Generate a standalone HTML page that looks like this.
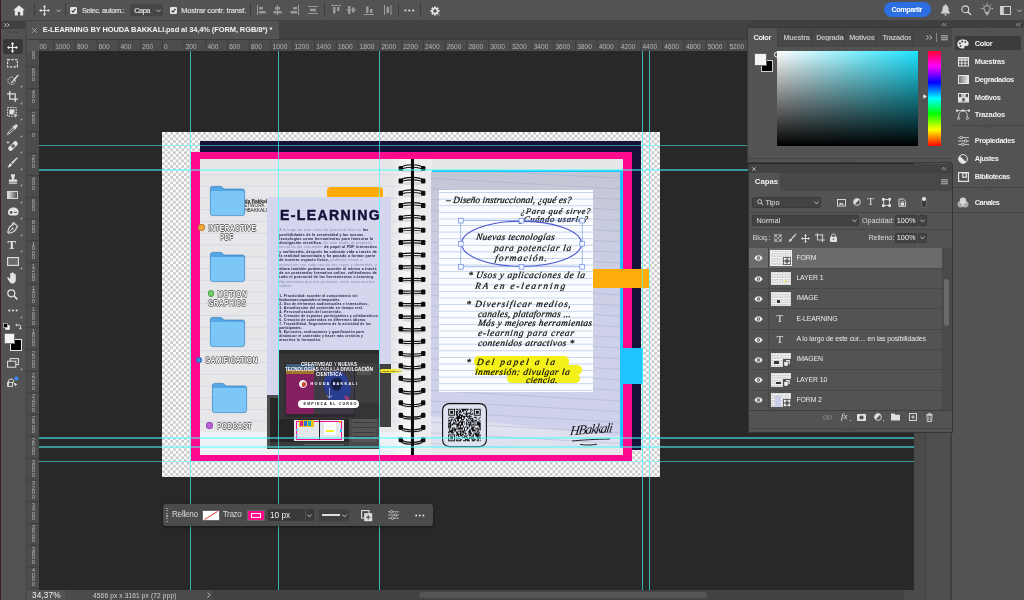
<!DOCTYPE html>
<html lang="es"><head><meta charset="utf-8"><title>E-LEARNING BY HOUDA BAKKALI.psd</title>
<style>
*{box-sizing:border-box;margin:0;padding:0}
html,body{width:1024px;height:600px;overflow:hidden;background:#282828;font-family:"Liberation Sans",sans-serif;color:#ddd;font-size:8px}
.a{position:absolute}
.t{position:absolute;white-space:nowrap;line-height:1}
#app{position:absolute;left:0;top:0;width:1024px;height:600px;overflow:hidden;background:#282828;will-change:transform}
.gv{position:absolute;width:1.2px;background:rgba(74,255,255,0.66);top:51px;height:539px}
.gh{position:absolute;height:1.5px;background:rgba(74,255,255,0.52);left:39px;width:875px}
.sep{position:absolute;width:1px;background:#3d3d3d;top:3px;height:14px}
svg{position:absolute;overflow:visible}
.hw{font-family:"Liberation Serif",serif;font-style:italic;color:#0e0e0e;-webkit-text-stroke:0.22px #0e0e0e;transform:skewX(-8deg);letter-spacing:-0.2px}
.pp{font-size:3.55px;color:#8286ad}
.pp b{color:#1b1640}
.pl{font-size:3.3px;color:#1b1640}
</style></head><body><div id="app">
<div class="a" style="left:39px;top:51px;width:875px;height:539px;background:#282828;"></div>
<div class="a" style="left:162px;top:132px;width:498px;height:345px;background:repeating-conic-gradient(#cbcbcb 0% 25%,#ffffff 0% 50%) 0 0/5.5px 5.5px"></div><div class="a" style="left:200.4px;top:141.2px;width:440.6px;height:308.6px;background:#17123a;"></div><div class="a" style="left:191px;top:152px;width:441px;height:309.3px;background:#ff0a8c;"></div><div class="a" style="left:200.3px;top:159.3px;width:422.4px;height:295.5px;background:#e7e7e9;"></div><div class="a" style="left:200.3px;top:173.9px;width:422.4px;height:280.9px;background-image:linear-gradient(to bottom,#d3d9e3 0,#d3d9e3 0.9px,transparent 0.9px,transparent 11.75px);background-size:100% 11.75px"></div><div class="a" style="left:200.3px;top:432px;width:210px;height:22.8px;background:rgba(240,246,250,0.75);"></div><div class="t" style="left:235.1px;top:198.8px;font-size:5.0px;color:#1a1a1a;font-weight:bold;letter-spacing:-0.1px;">Houda Bakkali</div><div class="t" style="left:240.8px;top:204px;font-size:4.8px;color:#2a2a2a;letter-spacing:-0.1px;">NETWORK</div><div class="t" style="left:239.4px;top:208.8px;font-size:4.8px;color:#2a2a2a;letter-spacing:-0.1px;">@HBAKKALI</div><svg style="left:210px;top:185.6px" width="35" height="30" viewBox="0 0 35 30"><path d="M2.4 0.4 H10 C11.6 0.4 12 1 13 2 C13.8 2.8 14.4 3 16 3 H32.6 C34 3 34.6 3.8 34.6 5 V27 C34.6 28.6 33.8 29.6 32.4 29.6 H2.6 C1.2 29.6 0.4 28.6 0.4 27 V2.6 C0.4 1.2 1.2 0.4 2.4 0.4 Z" fill="#55a6e6" stroke="#3d7fb8" stroke-width="0.7"/><path d="M0.8 6.6 C0.8 5.6 1.4 5 2.6 5 H32.4 C33.6 5 34.2 5.6 34.2 6.6 V27 C34.2 28.4 33.6 29.2 32.4 29.2 H2.6 C1.4 29.2 0.8 28.4 0.8 27 Z" fill="#7cc7f8"/></svg><svg style="left:210px;top:252px" width="35" height="30" viewBox="0 0 35 30"><path d="M2.4 0.4 H10 C11.6 0.4 12 1 13 2 C13.8 2.8 14.4 3 16 3 H32.6 C34 3 34.6 3.8 34.6 5 V27 C34.6 28.6 33.8 29.6 32.4 29.6 H2.6 C1.2 29.6 0.4 28.6 0.4 27 V2.6 C0.4 1.2 1.2 0.4 2.4 0.4 Z" fill="#55a6e6" stroke="#3d7fb8" stroke-width="0.7"/><path d="M0.8 6.6 C0.8 5.6 1.4 5 2.6 5 H32.4 C33.6 5 34.2 5.6 34.2 6.6 V27 C34.2 28.4 33.6 29.2 32.4 29.2 H2.6 C1.4 29.2 0.8 28.4 0.8 27 Z" fill="#7cc7f8"/></svg><svg style="left:210px;top:317.3px" width="35" height="30" viewBox="0 0 35 30"><path d="M2.4 0.4 H10 C11.6 0.4 12 1 13 2 C13.8 2.8 14.4 3 16 3 H32.6 C34 3 34.6 3.8 34.6 5 V27 C34.6 28.6 33.8 29.6 32.4 29.6 H2.6 C1.2 29.6 0.4 28.6 0.4 27 V2.6 C0.4 1.2 1.2 0.4 2.4 0.4 Z" fill="#55a6e6" stroke="#3d7fb8" stroke-width="0.7"/><path d="M0.8 6.6 C0.8 5.6 1.4 5 2.6 5 H32.4 C33.6 5 34.2 5.6 34.2 6.6 V27 C34.2 28.4 33.6 29.2 32.4 29.2 H2.6 C1.4 29.2 0.8 28.4 0.8 27 Z" fill="#7cc7f8"/></svg><svg style="left:211.6px;top:383px" width="35" height="30" viewBox="0 0 35 30"><path d="M2.4 0.4 H10 C11.6 0.4 12 1 13 2 C13.8 2.8 14.4 3 16 3 H32.6 C34 3 34.6 3.8 34.6 5 V27 C34.6 28.6 33.8 29.6 32.4 29.6 H2.6 C1.2 29.6 0.4 28.6 0.4 27 V2.6 C0.4 1.2 1.2 0.4 2.4 0.4 Z" fill="#55a6e6" stroke="#3d7fb8" stroke-width="0.7"/><path d="M0.8 6.6 C0.8 5.6 1.4 5 2.6 5 H32.4 C33.6 5 34.2 5.6 34.2 6.6 V27 C34.2 28.4 33.6 29.2 32.4 29.2 H2.6 C1.4 29.2 0.8 28.4 0.8 27 Z" fill="#7cc7f8"/></svg><div class="a" style="left:198.4px;top:224.4px;width:6.4px;height:6.4px;border-radius:50%;background:#f6a93b;border:0.5px solid rgba(0,0,0,0.25)"></div><div class="a" style="left:207.8px;top:290.40000000000003px;width:6.4px;height:6.4px;border-radius:50%;background:#6fd26a;border:0.5px solid rgba(0,0,0,0.25)"></div><div class="a" style="left:195.8px;top:356.5px;width:6.4px;height:6.4px;border-radius:50%;background:#3b8be6;border:0.5px solid rgba(0,0,0,0.25)"></div><div class="a" style="left:206.3px;top:422.40000000000003px;width:6.4px;height:6.4px;border-radius:50%;background:#c05fe0;border:0.5px solid rgba(0,0,0,0.25)"></div><div class="t" style="left:208px;top:223.6px;font-size:8.3px;font-weight:bold;letter-spacing:0.35px;color:#f6f6f6;transform:scaleX(0.818);transform-origin:left top;text-shadow:0.6px 0 #6c6c6c,-0.6px 0 #6c6c6c,0 0.6px #6c6c6c,0 -0.6px #6c6c6c,0.4px 0.4px #6c6c6c,-0.4px -0.4px #6c6c6c,0.4px -0.4px #6c6c6c,-0.4px 0.4px #6c6c6c">INTERACTIVE</div><div class="t" style="left:220px;top:232.6px;font-size:8.3px;font-weight:bold;letter-spacing:0.35px;color:#f6f6f6;transform:scaleX(0.759);transform-origin:left top;text-shadow:0.6px 0 #6c6c6c,-0.6px 0 #6c6c6c,0 0.6px #6c6c6c,0 -0.6px #6c6c6c,0.4px 0.4px #6c6c6c,-0.4px -0.4px #6c6c6c,0.4px -0.4px #6c6c6c,-0.4px 0.4px #6c6c6c">PDF</div><div class="t" style="left:217px;top:289.6px;font-size:8.3px;font-weight:bold;letter-spacing:0.35px;color:#f6f6f6;transform:scaleX(0.861);transform-origin:left top;text-shadow:0.6px 0 #6c6c6c,-0.6px 0 #6c6c6c,0 0.6px #6c6c6c,0 -0.6px #6c6c6c,0.4px 0.4px #6c6c6c,-0.4px -0.4px #6c6c6c,0.4px -0.4px #6c6c6c,-0.4px 0.4px #6c6c6c">MOTION</div><div class="t" style="left:208px;top:298.6px;font-size:8.3px;font-weight:bold;letter-spacing:0.35px;color:#f6f6f6;transform:scaleX(0.824);transform-origin:left top;text-shadow:0.6px 0 #6c6c6c,-0.6px 0 #6c6c6c,0 0.6px #6c6c6c,0 -0.6px #6c6c6c,0.4px 0.4px #6c6c6c,-0.4px -0.4px #6c6c6c,0.4px -0.4px #6c6c6c,-0.4px 0.4px #6c6c6c">GRAPHICS</div><div class="t" style="left:205.4px;top:355.6px;font-size:8.3px;font-weight:bold;letter-spacing:0.35px;color:#f6f6f6;transform:scaleX(0.816);transform-origin:left top;text-shadow:0.6px 0 #6c6c6c,-0.6px 0 #6c6c6c,0 0.6px #6c6c6c,0 -0.6px #6c6c6c,0.4px 0.4px #6c6c6c,-0.4px -0.4px #6c6c6c,0.4px -0.4px #6c6c6c,-0.4px 0.4px #6c6c6c">GAMIFICATION</div><div class="t" style="left:216.5px;top:421.6px;font-size:8.3px;font-weight:bold;letter-spacing:0.35px;color:#f6f6f6;transform:scaleX(0.809);transform-origin:left top;text-shadow:0.6px 0 #6c6c6c,-0.6px 0 #6c6c6c,0 0.6px #6c6c6c,0 -0.6px #6c6c6c,0.4px 0.4px #6c6c6c,-0.4px -0.4px #6c6c6c,0.4px -0.4px #6c6c6c,-0.4px 0.4px #6c6c6c">PODCAST</div><div class="a" style="left:326.6px;top:187.2px;width:56px;height:12px;background:#ffab0a;border-radius:4px 4px 0 0"></div><div class="a" style="left:266.8px;top:197px;width:124.2px;height:198px;background:#d3d6ec;"></div><div class="t" style="left:279.6px;top:207px;font-size:15.3px;font-weight:bold;color:#17123a;letter-spacing:1.477px;-webkit-text-stroke:0.5px #17123a;transform:scaleX(0.92);transform-origin:left top">E-LEARNING</div><div class="t pp" style="left:279.2px;top:229.40px;letter-spacing:0.272px">A lo largo de este curso he puesto el foco en <b>las</b></div><div class="t pp" style="left:279.2px;top:233.67px;letter-spacing:0.243px"><b>posibilidades de la creatividad y las nuevas</b></div><div class="t pp" style="left:279.2px;top:237.94px;letter-spacing:0.262px"><b>tecnologías como herramientas para fomentar la</b></div><div class="t pp" style="left:279.2px;top:242.21px;letter-spacing:0.261px"><b>divulgación científica.</b> De este modo, el proyecto</div><div class="t pp" style="left:279.2px;top:246.48px;letter-spacing:0.277px">inicial ha ido creciendo: <b>de papel al PDF interactivo</b></div><div class="t pp" style="left:279.2px;top:250.75px;letter-spacing:0.247px"><b>y multimedia, después ha cobrado vida a través de</b></div><div class="t pp" style="left:279.2px;top:255.02px;letter-spacing:0.264px"><b>la realidad aumentada y ha pasado a formar parte</b></div><div class="t pp" style="left:279.2px;top:259.29px;letter-spacing:0.247px"><b>de nuestro espacio físico,</b> pudiendo entrar a</div><div class="t pp" style="left:279.2px;top:263.56px;letter-spacing:0.251px">interactuar con cada uno de sus capas y elementos, y</div><div class="t pp" style="left:279.2px;top:267.83px;letter-spacing:0.249px"><b>ahora también podemos acceder al mismo a través</b></div><div class="t pp" style="left:279.2px;top:272.10px;letter-spacing:0.239px"><b>de un contenedor formativo online, valiéndonos de</b></div><div class="t pp" style="left:279.2px;top:276.37px;letter-spacing:0.283px"><b>todo el potencial de las herramientas e-learning.</b></div><div class="t pp" style="left:279.2px;top:280.64px;letter-spacing:0.291px">Herramientas que nos permiten, entre otros muchos</div><div class="t pp" style="left:279.2px;top:284.91px;letter-spacing:0.100px">valores:</div><div class="t pl" style="left:279.2px;top:295.40px;letter-spacing:0.250px"><b>1- Practicidad: acceder al conocimiento sin</b></div><div class="t pl" style="left:279.2px;top:299.38px;letter-spacing:0.029px"><b>limitaciones espaciales ni temporales.</b></div><div class="t pl" style="left:279.2px;top:303.36px;letter-spacing:0.240px"><b>2- Uso de elementos audiovisuales e interactivos.</b></div><div class="t pl" style="left:279.2px;top:307.34px;letter-spacing:0.271px"><b>3- Actualización del contenido en tiempo real.</b></div><div class="t pl" style="left:279.2px;top:311.32px;letter-spacing:0.321px"><b>4- Personalización del contenido.</b></div><div class="t pl" style="left:279.2px;top:315.30px;letter-spacing:0.248px"><b>5- Creación de espacios participativos y colaborativos.</b></div><div class="t pl" style="left:279.2px;top:319.28px;letter-spacing:0.254px"><b>6- Creación de contenidos en diferentes idioma.</b></div><div class="t pl" style="left:279.2px;top:323.26px;letter-spacing:0.266px"><b>7- Trazabilidad. Seguimiento de la actividad de los</b></div><div class="t pl" style="left:279.2px;top:327.24px;letter-spacing:0.100px"><b>participantes.</b></div><div class="t pl" style="left:279.2px;top:331.22px;letter-spacing:0.238px"><b>8- Ejercicios, evaluaciones y gamificación para</b></div><div class="t pl" style="left:279.2px;top:335.20px;letter-spacing:0.269px"><b>dinamizar el contenido y hacer más creativa y</b></div><div class="t pl" style="left:279.2px;top:339.18px;letter-spacing:0.318px"><b>atractiva la formación.</b></div><div class="a" style="left:279px;top:364px;width:112px;height:63px;background:#3a3a3a;"></div><div class="a" style="left:379px;top:364px;width:12px;height:63px;background:#404040;"></div><div class="a" style="left:380px;top:368.6px;width:22.4px;height:4.8px;background:#f2e52a;border-radius:2.4px"></div><div class="t" style="left:382.4px;top:370px;font-size:2px;color:#333;font-weight:bold;">CURSO · CREACIÓN</div><div class="a" style="left:267px;top:395px;width:112px;height:54px;background:#3b3b3b;"></div><div class="a" style="left:267px;top:395px;width:112px;height:3px;background:#4a4a4a;"></div><div class="a" style="left:267px;top:398px;width:3px;height:48px;background:#4d4d4d;"></div><div class="a" style="left:349px;top:398px;width:30px;height:48px;background:#4a4a4a;"></div><div class="a" style="left:270px;top:398px;width:79px;height:44px;background:#262626;"></div><div class="a" style="left:294px;top:419.6px;width:50px;height:21.6px;background:#e8e8ea;"></div><div class="a" style="left:296px;top:421px;width:46px;height:19px;background:#ff0a8c;"></div><div class="a" style="left:297.2px;top:422px;width:43.6px;height:17px;background:#e6e7ea;"></div><div class="a" style="left:298.5px;top:420px;width:15px;height:6.5px;background:#e8c21a;"></div><div class="a" style="left:300px;top:420.6px;width:3px;height:5px;background:#d0207a;"></div><div class="a" style="left:304px;top:420.6px;width:3px;height:5px;background:#2a6ae0;"></div><div class="a" style="left:308px;top:420.6px;width:3px;height:5px;background:#1aa7c0;"></div><div class="a" style="left:296px;top:429px;width:2.4px;height:2.4px;background:#7cc7f8;"></div><div class="a" style="left:296px;top:434px;width:2.4px;height:2.4px;background:#7cc7f8;"></div><div class="a" style="left:318.6px;top:420px;width:1px;height:20px;background:#222;"></div><div class="a" style="left:324px;top:421.5px;width:12px;height:13px;background:#fafbff;"></div><div class="a" style="left:325.5px;top:430px;width:8px;height:2.2px;background:#f4f01a;"></div><div class="a" style="left:338.6px;top:421px;width:2px;height:1.6px;background:#ffab0a;"></div><div class="a" style="left:340px;top:429px;width:2px;height:3px;background:#1fc3ff;"></div><div class="a" style="left:352px;top:402px;width:24px;height:40px;background:#555;"></div><div class="a" style="left:353px;top:404.0px;width:22px;height:0.6px;background:#3a3a3a;"></div><div class="a" style="left:353px;top:408.6px;width:22px;height:0.6px;background:#3a3a3a;"></div><div class="a" style="left:353px;top:413.2px;width:22px;height:0.6px;background:#3a3a3a;"></div><div class="a" style="left:353px;top:417.8px;width:22px;height:0.6px;background:#3a3a3a;"></div><div class="a" style="left:353px;top:422.4px;width:22px;height:0.6px;background:#3a3a3a;"></div><div class="a" style="left:353px;top:427.0px;width:22px;height:0.6px;background:#3a3a3a;"></div><div class="a" style="left:353px;top:431.6px;width:22px;height:0.6px;background:#3a3a3a;"></div><div class="a" style="left:353px;top:436.2px;width:22px;height:0.6px;background:#3a3a3a;"></div><div class="a" style="left:304px;top:443.5px;width:40px;height:1.6px;background:#666;"></div><div class="a" style="left:279px;top:350px;width:100px;height:69px;background:#3c3d40;"></div><div class="a" style="left:279px;top:350px;width:100px;height:4px;background:#2f2f2f;"></div><div class="a" style="left:285px;top:363px;width:70px;height:54px;background:#2e2830;"></div><div class="a" style="left:286px;top:364px;width:28px;height:50px;background:#b41c7c;"></div><div class="a" style="left:286px;top:364px;width:28px;height:6px;background:#4f7fb0;"></div><div class="a" style="left:286px;top:370px;width:28px;height:4px;background:#e0a030;"></div><div class="a" style="left:314px;top:364px;width:40px;height:50px;background:#4a4552;"></div><svg style="left:322px;top:370px" width="32" height="40"><path d="M6 4 C14 -2 26 2 26 12 C32 18 28 30 22 34 C14 40 6 34 6 26 C0 18 0 10 6 4 Z" fill="#2a49c8"/><path d="M12 8 C18 6 22 10 20 16 C18 22 12 22 10 18 C8 14 8 10 12 8Z" fill="#121a5a"/><path d="M22 26 C27 25 29 30 25 33 Z" fill="#e04aa0"/><path d="M25 30 L31 36 L24 37Z" fill="#e8c33a"/></svg><div class="a" style="left:355px;top:363px;width:24px;height:40px;background:#4a4a4a;"></div><div class="a" style="left:357px;top:366px;width:14px;height:9px;background:#6a6a6a;"></div><div class="a" style="left:279px;top:350px;width:100px;height:69px;background:rgba(40,40,44,0.35);"></div><div class="t" style="left:279px;width:100px;text-align:center;top:362.6px;font-size:4.5px;color:#fff;font-weight:bold;letter-spacing:0.08px;">CREATIVIDAD <span style="font-weight:normal">Y</span> NUEVAS</div><div class="t" style="left:279px;width:100px;text-align:center;top:368px;font-size:4.5px;color:#fff;font-weight:bold;letter-spacing:0.08px;">TECNOLOGÍAS <span style="font-weight:normal">PARA LA</span> DIVULGACIÓN</div><div class="t" style="left:279px;width:100px;text-align:center;top:373.4px;font-size:4.5px;color:#fff;font-weight:bold;letter-spacing:0.08px;">CIENTÍFICA</div><div class="a" style="left:299px;top:380px;width:8.4px;height:8.4px;border-radius:50%;background:#f2e9e4;border:0.6px solid #fff;overflow:hidden"><div class="a" style="left:2.2px;top:1.2px;width:3.6px;height:6.8px;background:#c8452f;border-radius:2px"></div></div><div class="t" style="left:310.6px;top:382.6px;font-size:3.8px;color:#fff;font-weight:bold;letter-spacing:1.2px">HOUDA BAKKALI</div><svg style="left:326px;top:388px" width="7" height="11"><path d="M3.5 0 V10 M0.6 7 L3.5 10 L6.4 7" stroke="#fff" stroke-width="0.5" fill="none"/></svg><div class="a" style="left:298px;top:400.4px;width:61px;height:8px;background:#fff;border-radius:4px"></div><div class="t" style="left:303.6px;top:402.6px;font-size:3.7px;color:#222;font-weight:bold;letter-spacing:1.1px">EMPIEZA EL CURSO</div><div class="a" style="left:413px;top:159.3px;width:19px;height:295.5px;background:#ececee;"></div><div class="a" style="left:392px;top:159.3px;width:18px;height:295.5px;background:linear-gradient(to right,rgba(255,255,255,0),rgba(250,250,252,0.9))"></div><svg style="left:0;top:0" width="1024" height="600"><ellipse cx="412" cy="171.3" rx="10" ry="1.5" fill="#c8c4c0" opacity="0.6"/><path d="M400.8 167.9 C404 163.7 420 163.7 423.2 167.9" stroke="#111" stroke-width="1.2" fill="none"/><path d="M400.8 170.1 C404 166.3 420 166.3 423.2 170.1" stroke="#1a1a1a" stroke-width="1.1" fill="none"/><rect x="398.6" y="166.1" width="4.4" height="5" rx="1.2" fill="#0c0c0c"/><rect x="421" y="166.1" width="4.4" height="5" rx="1.2" fill="#0c0c0c"/><ellipse cx="412" cy="183.6" rx="10" ry="1.5" fill="#c8c4c0" opacity="0.6"/><path d="M400.8 180.2 C404 176.4 420 176.4 423.2 180.2" stroke="#111" stroke-width="1.2" fill="none"/><path d="M400.8 182.4 C404 179.0 420 179.0 423.2 182.4" stroke="#1a1a1a" stroke-width="1.1" fill="none"/><rect x="398.6" y="178.4" width="4.4" height="5" rx="1.2" fill="#0c0c0c"/><rect x="421" y="178.4" width="4.4" height="5" rx="1.2" fill="#0c0c0c"/><ellipse cx="412" cy="195.9" rx="10" ry="1.5" fill="#c8c4c0" opacity="0.6"/><path d="M400.8 192.5 C404 189.1 420 189.1 423.2 192.5" stroke="#111" stroke-width="1.2" fill="none"/><path d="M400.8 194.7 C404 191.7 420 191.7 423.2 194.7" stroke="#1a1a1a" stroke-width="1.1" fill="none"/><rect x="398.6" y="190.7" width="4.4" height="5" rx="1.2" fill="#0c0c0c"/><rect x="421" y="190.7" width="4.4" height="5" rx="1.2" fill="#0c0c0c"/><ellipse cx="412" cy="208.3" rx="10" ry="1.5" fill="#c8c4c0" opacity="0.6"/><path d="M400.8 204.9 C404 201.8 420 201.8 423.2 204.9" stroke="#111" stroke-width="1.2" fill="none"/><path d="M400.8 207.1 C404 204.3 420 204.3 423.2 207.1" stroke="#1a1a1a" stroke-width="1.1" fill="none"/><rect x="398.6" y="203.1" width="4.4" height="5" rx="1.2" fill="#0c0c0c"/><rect x="421" y="203.1" width="4.4" height="5" rx="1.2" fill="#0c0c0c"/><ellipse cx="412" cy="220.6" rx="10" ry="1.5" fill="#c8c4c0" opacity="0.6"/><path d="M400.8 217.2 C404 214.6 420 214.6 423.2 217.2" stroke="#111" stroke-width="1.2" fill="none"/><path d="M400.8 219.4 C404 217.0 420 217.0 423.2 219.4" stroke="#1a1a1a" stroke-width="1.1" fill="none"/><rect x="398.6" y="215.4" width="4.4" height="5" rx="1.2" fill="#0c0c0c"/><rect x="421" y="215.4" width="4.4" height="5" rx="1.2" fill="#0c0c0c"/><ellipse cx="412" cy="232.9" rx="10" ry="1.5" fill="#c8c4c0" opacity="0.6"/><path d="M400.8 229.5 C404 227.3 420 227.3 423.2 229.5" stroke="#111" stroke-width="1.2" fill="none"/><path d="M400.8 231.7 C404 229.7 420 229.7 423.2 231.7" stroke="#1a1a1a" stroke-width="1.1" fill="none"/><rect x="398.6" y="227.7" width="4.4" height="5" rx="1.2" fill="#0c0c0c"/><rect x="421" y="227.7" width="4.4" height="5" rx="1.2" fill="#0c0c0c"/><ellipse cx="412" cy="245.2" rx="10" ry="1.5" fill="#c8c4c0" opacity="0.6"/><path d="M400.8 241.8 C404 240.0 420 240.0 423.2 241.8" stroke="#111" stroke-width="1.2" fill="none"/><path d="M400.8 244.1 C404 242.4 420 242.4 423.2 244.1" stroke="#1a1a1a" stroke-width="1.1" fill="none"/><rect x="398.6" y="240.1" width="4.4" height="5" rx="1.2" fill="#0c0c0c"/><rect x="421" y="240.1" width="4.4" height="5" rx="1.2" fill="#0c0c0c"/><ellipse cx="412" cy="257.6" rx="10" ry="1.5" fill="#c8c4c0" opacity="0.6"/><path d="M400.8 254.2 C404 252.7 420 252.7 423.2 254.2" stroke="#111" stroke-width="1.2" fill="none"/><path d="M400.8 256.4 C404 255.1 420 255.1 423.2 256.4" stroke="#1a1a1a" stroke-width="1.1" fill="none"/><rect x="398.6" y="252.4" width="4.4" height="5" rx="1.2" fill="#0c0c0c"/><rect x="421" y="252.4" width="4.4" height="5" rx="1.2" fill="#0c0c0c"/><ellipse cx="412" cy="269.9" rx="10" ry="1.5" fill="#c8c4c0" opacity="0.6"/><path d="M400.8 266.5 C404 265.4 420 265.4 423.2 266.5" stroke="#111" stroke-width="1.2" fill="none"/><path d="M400.8 268.7 C404 267.7 420 267.7 423.2 268.7" stroke="#1a1a1a" stroke-width="1.1" fill="none"/><rect x="398.6" y="264.7" width="4.4" height="5" rx="1.2" fill="#0c0c0c"/><rect x="421" y="264.7" width="4.4" height="5" rx="1.2" fill="#0c0c0c"/><ellipse cx="412" cy="282.2" rx="10" ry="1.5" fill="#c8c4c0" opacity="0.6"/><path d="M400.8 278.8 C404 278.2 420 278.2 423.2 278.8" stroke="#111" stroke-width="1.2" fill="none"/><path d="M400.8 281.0 C404 280.4 420 280.4 423.2 281.0" stroke="#1a1a1a" stroke-width="1.1" fill="none"/><rect x="398.6" y="277.0" width="4.4" height="5" rx="1.2" fill="#0c0c0c"/><rect x="421" y="277.0" width="4.4" height="5" rx="1.2" fill="#0c0c0c"/><ellipse cx="412" cy="294.6" rx="10" ry="1.5" fill="#c8c4c0" opacity="0.6"/><path d="M400.8 291.2 C404 290.9 420 290.9 423.2 291.2" stroke="#111" stroke-width="1.2" fill="none"/><path d="M400.8 293.4 C404 293.1 420 293.1 423.2 293.4" stroke="#1a1a1a" stroke-width="1.1" fill="none"/><rect x="398.6" y="289.4" width="4.4" height="5" rx="1.2" fill="#0c0c0c"/><rect x="421" y="289.4" width="4.4" height="5" rx="1.2" fill="#0c0c0c"/><ellipse cx="412" cy="307.9" rx="10" ry="1.5" fill="#c8c4c0" opacity="0.6"/><path d="M400.8 303.5 C404 303.6 420 303.6 423.2 303.5" stroke="#111" stroke-width="1.2" fill="none"/><path d="M400.8 305.7 C404 305.8 420 305.8 423.2 305.7" stroke="#1a1a1a" stroke-width="1.1" fill="none"/><rect x="398.6" y="301.7" width="4.4" height="5" rx="1.2" fill="#0c0c0c"/><rect x="421" y="301.7" width="4.4" height="5" rx="1.2" fill="#0c0c0c"/><ellipse cx="412" cy="320.2" rx="10" ry="1.5" fill="#c8c4c0" opacity="0.6"/><path d="M400.8 315.8 C404 316.3 420 316.3 423.2 315.8" stroke="#111" stroke-width="1.2" fill="none"/><path d="M400.8 318.0 C404 318.5 420 318.5 423.2 318.0" stroke="#1a1a1a" stroke-width="1.1" fill="none"/><rect x="398.6" y="314.0" width="4.4" height="5" rx="1.2" fill="#0c0c0c"/><rect x="421" y="314.0" width="4.4" height="5" rx="1.2" fill="#0c0c0c"/><ellipse cx="412" cy="332.6" rx="10" ry="1.5" fill="#c8c4c0" opacity="0.6"/><path d="M400.8 328.2 C404 329.0 420 329.0 423.2 328.2" stroke="#111" stroke-width="1.2" fill="none"/><path d="M400.8 330.4 C404 331.2 420 331.2 423.2 330.4" stroke="#1a1a1a" stroke-width="1.1" fill="none"/><rect x="398.6" y="326.4" width="4.4" height="5" rx="1.2" fill="#0c0c0c"/><rect x="421" y="326.4" width="4.4" height="5" rx="1.2" fill="#0c0c0c"/><ellipse cx="412" cy="344.9" rx="10" ry="1.5" fill="#c8c4c0" opacity="0.6"/><path d="M400.8 340.5 C404 341.8 420 341.8 423.2 340.5" stroke="#111" stroke-width="1.2" fill="none"/><path d="M400.8 342.7 C404 343.8 420 343.8 423.2 342.7" stroke="#1a1a1a" stroke-width="1.1" fill="none"/><rect x="398.6" y="338.7" width="4.4" height="5" rx="1.2" fill="#0c0c0c"/><rect x="421" y="338.7" width="4.4" height="5" rx="1.2" fill="#0c0c0c"/><ellipse cx="412" cy="357.2" rx="10" ry="1.5" fill="#c8c4c0" opacity="0.6"/><path d="M400.8 352.8 C404 354.5 420 354.5 423.2 352.8" stroke="#111" stroke-width="1.2" fill="none"/><path d="M400.8 355.0 C404 356.5 420 356.5 423.2 355.0" stroke="#1a1a1a" stroke-width="1.1" fill="none"/><rect x="398.6" y="351.0" width="4.4" height="5" rx="1.2" fill="#0c0c0c"/><rect x="421" y="351.0" width="4.4" height="5" rx="1.2" fill="#0c0c0c"/><ellipse cx="412" cy="369.6" rx="10" ry="1.5" fill="#c8c4c0" opacity="0.6"/><path d="M400.8 365.1 C404 367.2 420 367.2 423.2 365.1" stroke="#111" stroke-width="1.2" fill="none"/><path d="M400.8 367.3 C404 369.2 420 369.2 423.2 367.3" stroke="#1a1a1a" stroke-width="1.1" fill="none"/><rect x="398.6" y="363.3" width="4.4" height="5" rx="1.2" fill="#0c0c0c"/><rect x="421" y="363.3" width="4.4" height="5" rx="1.2" fill="#0c0c0c"/><ellipse cx="412" cy="381.9" rx="10" ry="1.5" fill="#c8c4c0" opacity="0.6"/><path d="M400.8 377.5 C404 379.9 420 379.9 423.2 377.5" stroke="#111" stroke-width="1.2" fill="none"/><path d="M400.8 379.7 C404 381.9 420 381.9 423.2 379.7" stroke="#1a1a1a" stroke-width="1.1" fill="none"/><rect x="398.6" y="375.7" width="4.4" height="5" rx="1.2" fill="#0c0c0c"/><rect x="421" y="375.7" width="4.4" height="5" rx="1.2" fill="#0c0c0c"/><ellipse cx="412" cy="394.2" rx="10" ry="1.5" fill="#c8c4c0" opacity="0.6"/><path d="M400.8 389.8 C404 392.6 420 392.6 423.2 389.8" stroke="#111" stroke-width="1.2" fill="none"/><path d="M400.8 392.0 C404 394.6 420 394.6 423.2 392.0" stroke="#1a1a1a" stroke-width="1.1" fill="none"/><rect x="398.6" y="388.0" width="4.4" height="5" rx="1.2" fill="#0c0c0c"/><rect x="421" y="388.0" width="4.4" height="5" rx="1.2" fill="#0c0c0c"/><ellipse cx="412" cy="406.5" rx="10" ry="1.5" fill="#c8c4c0" opacity="0.6"/><path d="M400.8 402.1 C404 405.4 420 405.4 423.2 402.1" stroke="#111" stroke-width="1.2" fill="none"/><path d="M400.8 404.3 C404 407.2 420 407.2 423.2 404.3" stroke="#1a1a1a" stroke-width="1.1" fill="none"/><rect x="398.6" y="400.3" width="4.4" height="5" rx="1.2" fill="#0c0c0c"/><rect x="421" y="400.3" width="4.4" height="5" rx="1.2" fill="#0c0c0c"/><ellipse cx="412" cy="418.9" rx="10" ry="1.5" fill="#c8c4c0" opacity="0.6"/><path d="M400.8 414.5 C404 418.1 420 418.1 423.2 414.5" stroke="#111" stroke-width="1.2" fill="none"/><path d="M400.8 416.7 C404 419.9 420 419.9 423.2 416.7" stroke="#1a1a1a" stroke-width="1.1" fill="none"/><rect x="398.6" y="412.7" width="4.4" height="5" rx="1.2" fill="#0c0c0c"/><rect x="421" y="412.7" width="4.4" height="5" rx="1.2" fill="#0c0c0c"/><ellipse cx="412" cy="431.2" rx="10" ry="1.5" fill="#c8c4c0" opacity="0.6"/><path d="M400.8 426.8 C404 430.8 420 430.8 423.2 426.8" stroke="#111" stroke-width="1.2" fill="none"/><path d="M400.8 429.0 C404 432.6 420 432.6 423.2 429.0" stroke="#1a1a1a" stroke-width="1.1" fill="none"/><rect x="398.6" y="425.0" width="4.4" height="5" rx="1.2" fill="#0c0c0c"/><rect x="421" y="425.0" width="4.4" height="5" rx="1.2" fill="#0c0c0c"/><ellipse cx="412" cy="443.5" rx="10" ry="1.5" fill="#c8c4c0" opacity="0.6"/><path d="M400.8 439.1 C404 443.5 420 443.5 423.2 439.1" stroke="#111" stroke-width="1.2" fill="none"/><path d="M400.8 441.3 C404 445.3 420 445.3 423.2 441.3" stroke="#1a1a1a" stroke-width="1.1" fill="none"/><rect x="398.6" y="437.3" width="4.4" height="5" rx="1.2" fill="#0c0c0c"/><rect x="421" y="437.3" width="4.4" height="5" rx="1.2" fill="#0c0c0c"/></svg><div class="a" style="left:410.6px;top:159.3px;width:3.4px;height:295.5px;background:#0c0c0c;"></div><div class="a" style="left:431px;top:172px;width:190px;height:275.6px;overflow:hidden;background:linear-gradient(to bottom,#c5c6d4 0,#c9cbdf 50px,#cdd0e8 140px,#cfd2ea 100%)"><svg style="left:0;top:220px" width="190" height="56"><path d="M0 24 L56 30 L190 44.5 V56 H0 Z" fill="#dfe1ee"/></svg><div class="a" style="left:-20px;top:-20px;width:240px;height:320px;transform:rotate(3.2deg);transform-origin:20px 20px;background-image:linear-gradient(to bottom,rgba(140,160,200,0.34) 0,rgba(140,160,200,0.34) 0.8px,transparent 0.8px,transparent 10.6px);background-size:100% 10.6px;background-position:0 4.6px"></div></div><div class="a" style="left:431.6px;top:169.6px;width:191.4px;height:2.6px;background:#1fc3ff;"></div><div class="a" style="left:620px;top:169.6px;width:3px;height:278.4px;background:#1fc3ff;"></div><div class="a" style="left:439.2px;top:190px;width:154.1px;height:201.5px;background-color:#fbfcff;background-image:linear-gradient(to bottom,transparent 0,transparent 6px,#c3d3ea 6px,#c3d3ea 6.6px);background-size:100% 6.6px;background-position:0 3px"></div><div class="a" style="left:473.6px;top:355.5px;width:95px;height:11px;background:#f4f01a;border-radius:5px"></div><div class="a" style="left:475px;top:364.5px;width:106.7px;height:10.5px;background:#f4f01a;border-radius:5px"></div><div class="a" style="left:507px;top:373.5px;width:73px;height:9.5px;background:#f4f01a;border-radius:5px"></div><div class="t hw" style="left:445.5px;top:195.67px;font-size:9.4px;letter-spacing:0.075px">– Diseño instruccional, ¿qué es?</div><div class="t hw" style="left:520.5px;top:207.07px;font-size:8.6px;letter-spacing:0.686px">¿Para qué sirve?</div><div class="t hw" style="left:519px;top:215.47px;font-size:8.6px;letter-spacing:0.647px">¿Cuándo usarlo?</div><div class="t hw" style="left:476px;top:232.77px;font-size:9.4px;letter-spacing:0.325px">Nuevas tecnologías</div><div class="t hw" style="left:493.8px;top:244.17px;font-size:9.4px;letter-spacing:0.723px">para potenciar la</div><div class="t hw" style="left:495px;top:254.37px;font-size:9.4px;letter-spacing:1.234px">formación.</div><div class="t hw" style="left:468px;top:271.37px;font-size:9.4px;letter-spacing:0.544px">* Usos y aplicaciones de la</div><div class="t hw" style="left:474.8px;top:282.37px;font-size:9.4px;letter-spacing:1.755px">RA en e-learning</div><div class="t hw" style="left:466px;top:300.37px;font-size:9.4px;letter-spacing:1.019px">* Diversificar medios,</div><div class="t hw" style="left:478px;top:309.77px;font-size:9.4px;letter-spacing:0.216px">canales, plataformas ...</div><div class="t hw" style="left:478px;top:318.97px;font-size:9.4px;letter-spacing:0.293px">Más y mejores herramientas</div><div class="t hw" style="left:478px;top:329.37px;font-size:9.4px;letter-spacing:0.729px">e-learning para crear</div><div class="t hw" style="left:478px;top:338.97px;font-size:9.4px;letter-spacing:0.386px">contenidos atractivos *</div><div class="t hw" style="left:465.5px;top:358.37px;font-size:9.4px;letter-spacing:1.905px">* Del papel a la</div><div class="t hw" style="left:475px;top:367.57px;font-size:9.4px;letter-spacing:0.492px">inmersión: divulgar la</div><div class="t hw" style="left:526px;top:376.37px;font-size:9.4px;letter-spacing:0.311px">ciencia.</div><svg style="left:455px;top:215px" width="135" height="58"><ellipse cx="66.5" cy="28.7" rx="60" ry="22.6" fill="none" stroke="#4d58cf" stroke-width="1.15"/><rect x="5.8" y="5.6" width="121.4" height="46.2" fill="none" stroke="#6b8fe0" stroke-width="0.6"/><rect x="3.4" y="3.1999999999999997" width="4.8" height="4.8" fill="#f2f5ff" stroke="#6b8fe0" stroke-width="0.7"/><rect x="64.1" y="3.1999999999999997" width="4.8" height="4.8" fill="#f2f5ff" stroke="#6b8fe0" stroke-width="0.7"/><rect x="124.8" y="3.1999999999999997" width="4.8" height="4.8" fill="#f2f5ff" stroke="#6b8fe0" stroke-width="0.7"/><rect x="3.4" y="26.3" width="4.8" height="4.8" fill="#f2f5ff" stroke="#6b8fe0" stroke-width="0.7"/><rect x="124.8" y="26.3" width="4.8" height="4.8" fill="#f2f5ff" stroke="#6b8fe0" stroke-width="0.7"/><rect x="3.4" y="49.4" width="4.8" height="4.8" fill="#f2f5ff" stroke="#6b8fe0" stroke-width="0.7"/><rect x="64.1" y="49.4" width="4.8" height="4.8" fill="#f2f5ff" stroke="#6b8fe0" stroke-width="0.7"/><rect x="124.8" y="49.4" width="4.8" height="4.8" fill="#f2f5ff" stroke="#6b8fe0" stroke-width="0.7"/></svg><div class="a" style="left:593.3px;top:269.3px;width:56px;height:18.4px;background:#ffab0a;"></div><div class="a" style="left:622px;top:347.6px;width:20.6px;height:36.2px;background:#1fc3ff;"></div><svg style="left:442px;top:402.6px" width="45" height="44.2"><rect x="0.6" y="0.6" width="43.8" height="43" rx="6.5" fill="#dfe2f0" stroke="#111" stroke-width="1.1"/><path d="M14.08 5.80h0.98v0.98h-0.98zM15.07 5.80h0.98v0.98h-0.98zM17.04 5.80h0.98v0.98h-0.98zM19.00 5.80h0.98v0.98h-0.98zM19.99 5.80h0.98v0.98h-0.98zM20.98 5.80h0.98v0.98h-0.98zM21.96 5.80h0.98v0.98h-0.98zM22.95 5.80h0.98v0.98h-0.98zM23.93 5.80h0.98v0.98h-0.98zM24.91 5.80h0.98v0.98h-0.98zM25.90 5.80h0.98v0.98h-0.98zM27.87 5.80h0.98v0.98h-0.98zM28.86 5.80h0.98v0.98h-0.98zM16.05 6.79h0.98v0.98h-0.98zM18.02 6.79h0.98v0.98h-0.98zM19.99 6.79h0.98v0.98h-0.98zM20.98 6.79h0.98v0.98h-0.98zM21.96 6.79h0.98v0.98h-0.98zM22.95 6.79h0.98v0.98h-0.98zM24.91 6.79h0.98v0.98h-0.98zM27.87 6.79h0.98v0.98h-0.98zM29.84 6.79h0.98v0.98h-0.98zM14.08 7.77h0.98v0.98h-0.98zM15.07 7.77h0.98v0.98h-0.98zM17.04 7.77h0.98v0.98h-0.98zM18.02 7.77h0.98v0.98h-0.98zM19.99 7.77h0.98v0.98h-0.98zM20.98 7.77h0.98v0.98h-0.98zM23.93 7.77h0.98v0.98h-0.98zM28.86 7.77h0.98v0.98h-0.98zM14.08 8.75h0.98v0.98h-0.98zM15.07 8.75h0.98v0.98h-0.98zM17.04 8.75h0.98v0.98h-0.98zM18.02 8.75h0.98v0.98h-0.98zM19.00 8.75h0.98v0.98h-0.98zM23.93 8.75h0.98v0.98h-0.98zM27.87 8.75h0.98v0.98h-0.98zM14.08 9.74h0.98v0.98h-0.98zM16.05 9.74h0.98v0.98h-0.98zM20.98 9.74h0.98v0.98h-0.98zM21.96 9.74h0.98v0.98h-0.98zM23.93 9.74h0.98v0.98h-0.98zM24.91 9.74h0.98v0.98h-0.98zM25.90 9.74h0.98v0.98h-0.98zM26.88 9.74h0.98v0.98h-0.98zM27.87 9.74h0.98v0.98h-0.98zM29.84 9.74h0.98v0.98h-0.98zM14.08 10.72h0.98v0.98h-0.98zM15.07 10.72h0.98v0.98h-0.98zM17.04 10.72h0.98v0.98h-0.98zM18.02 10.72h0.98v0.98h-0.98zM22.95 10.72h0.98v0.98h-0.98zM23.93 10.72h0.98v0.98h-0.98zM24.91 10.72h0.98v0.98h-0.98zM27.87 10.72h0.98v0.98h-0.98zM28.86 10.72h0.98v0.98h-0.98zM29.84 10.72h0.98v0.98h-0.98zM14.08 11.71h0.98v0.98h-0.98zM15.07 11.71h0.98v0.98h-0.98zM17.04 11.71h0.98v0.98h-0.98zM18.02 11.71h0.98v0.98h-0.98zM19.00 11.71h0.98v0.98h-0.98zM19.99 11.71h0.98v0.98h-0.98zM23.93 11.71h0.98v0.98h-0.98zM26.88 11.71h0.98v0.98h-0.98zM15.07 12.70h0.98v0.98h-0.98zM16.05 12.70h0.98v0.98h-0.98zM17.04 12.70h0.98v0.98h-0.98zM19.00 12.70h0.98v0.98h-0.98zM19.99 12.70h0.98v0.98h-0.98zM20.98 12.70h0.98v0.98h-0.98zM21.96 12.70h0.98v0.98h-0.98zM22.95 12.70h0.98v0.98h-0.98zM23.93 12.70h0.98v0.98h-0.98zM24.91 12.70h0.98v0.98h-0.98zM25.90 12.70h0.98v0.98h-0.98zM26.88 12.70h0.98v0.98h-0.98zM27.87 12.70h0.98v0.98h-0.98zM28.86 12.70h0.98v0.98h-0.98zM7.19 13.68h0.98v0.98h-0.98zM8.17 13.68h0.98v0.98h-0.98zM9.16 13.68h0.98v0.98h-0.98zM10.14 13.68h0.98v0.98h-0.98zM11.12 13.68h0.98v0.98h-0.98zM14.08 13.68h0.98v0.98h-0.98zM15.07 13.68h0.98v0.98h-0.98zM16.05 13.68h0.98v0.98h-0.98zM17.04 13.68h0.98v0.98h-0.98zM18.02 13.68h0.98v0.98h-0.98zM19.00 13.68h0.98v0.98h-0.98zM20.98 13.68h0.98v0.98h-0.98zM21.96 13.68h0.98v0.98h-0.98zM24.91 13.68h0.98v0.98h-0.98zM26.88 13.68h0.98v0.98h-0.98zM31.81 13.68h0.98v0.98h-0.98zM32.80 13.68h0.98v0.98h-0.98zM33.78 13.68h0.98v0.98h-0.98zM37.72 13.68h0.98v0.98h-0.98zM6.20 14.66h0.98v0.98h-0.98zM13.09 14.66h0.98v0.98h-0.98zM14.08 14.66h0.98v0.98h-0.98zM15.07 14.66h0.98v0.98h-0.98zM16.05 14.66h0.98v0.98h-0.98zM17.04 14.66h0.98v0.98h-0.98zM18.02 14.66h0.98v0.98h-0.98zM19.00 14.66h0.98v0.98h-0.98zM21.96 14.66h0.98v0.98h-0.98zM25.90 14.66h0.98v0.98h-0.98zM26.88 14.66h0.98v0.98h-0.98zM27.87 14.66h0.98v0.98h-0.98zM28.86 14.66h0.98v0.98h-0.98zM29.84 14.66h0.98v0.98h-0.98zM33.78 14.66h0.98v0.98h-0.98zM36.73 14.66h0.98v0.98h-0.98zM9.16 15.65h0.98v0.98h-0.98zM10.14 15.65h0.98v0.98h-0.98zM12.11 15.65h0.98v0.98h-0.98zM15.07 15.65h0.98v0.98h-0.98zM16.05 15.65h0.98v0.98h-0.98zM19.00 15.65h0.98v0.98h-0.98zM19.99 15.65h0.98v0.98h-0.98zM20.98 15.65h0.98v0.98h-0.98zM23.93 15.65h0.98v0.98h-0.98zM27.87 15.65h0.98v0.98h-0.98zM29.84 15.65h0.98v0.98h-0.98zM30.82 15.65h0.98v0.98h-0.98zM35.75 15.65h0.98v0.98h-0.98zM6.20 16.63h0.98v0.98h-0.98zM7.19 16.63h0.98v0.98h-0.98zM8.17 16.63h0.98v0.98h-0.98zM9.16 16.63h0.98v0.98h-0.98zM11.12 16.63h0.98v0.98h-0.98zM12.11 16.63h0.98v0.98h-0.98zM13.09 16.63h0.98v0.98h-0.98zM15.07 16.63h0.98v0.98h-0.98zM16.05 16.63h0.98v0.98h-0.98zM19.00 16.63h0.98v0.98h-0.98zM20.98 16.63h0.98v0.98h-0.98zM23.93 16.63h0.98v0.98h-0.98zM24.91 16.63h0.98v0.98h-0.98zM25.90 16.63h0.98v0.98h-0.98zM26.88 16.63h0.98v0.98h-0.98zM28.86 16.63h0.98v0.98h-0.98zM29.84 16.63h0.98v0.98h-0.98zM32.80 16.63h0.98v0.98h-0.98zM33.78 16.63h0.98v0.98h-0.98zM36.73 16.63h0.98v0.98h-0.98zM6.20 17.62h0.98v0.98h-0.98zM7.19 17.62h0.98v0.98h-0.98zM9.16 17.62h0.98v0.98h-0.98zM13.09 17.62h0.98v0.98h-0.98zM15.07 17.62h0.98v0.98h-0.98zM16.05 17.62h0.98v0.98h-0.98zM18.02 17.62h0.98v0.98h-0.98zM19.99 17.62h0.98v0.98h-0.98zM24.91 17.62h0.98v0.98h-0.98zM28.86 17.62h0.98v0.98h-0.98zM29.84 17.62h0.98v0.98h-0.98zM30.82 17.62h0.98v0.98h-0.98zM31.81 17.62h0.98v0.98h-0.98zM32.80 17.62h0.98v0.98h-0.98zM33.78 17.62h0.98v0.98h-0.98zM37.72 17.62h0.98v0.98h-0.98zM8.17 18.61h0.98v0.98h-0.98zM11.12 18.61h0.98v0.98h-0.98zM13.09 18.61h0.98v0.98h-0.98zM14.08 18.61h0.98v0.98h-0.98zM17.04 18.61h0.98v0.98h-0.98zM18.02 18.61h0.98v0.98h-0.98zM19.00 18.61h0.98v0.98h-0.98zM19.99 18.61h0.98v0.98h-0.98zM20.98 18.61h0.98v0.98h-0.98zM21.96 18.61h0.98v0.98h-0.98zM23.93 18.61h0.98v0.98h-0.98zM25.90 18.61h0.98v0.98h-0.98zM26.88 18.61h0.98v0.98h-0.98zM27.87 18.61h0.98v0.98h-0.98zM29.84 18.61h0.98v0.98h-0.98zM30.82 18.61h0.98v0.98h-0.98zM34.77 18.61h0.98v0.98h-0.98zM35.75 18.61h0.98v0.98h-0.98zM36.73 18.61h0.98v0.98h-0.98zM6.20 19.59h0.98v0.98h-0.98zM7.19 19.59h0.98v0.98h-0.98zM8.17 19.59h0.98v0.98h-0.98zM11.12 19.59h0.98v0.98h-0.98zM12.11 19.59h0.98v0.98h-0.98zM16.05 19.59h0.98v0.98h-0.98zM17.04 19.59h0.98v0.98h-0.98zM19.00 19.59h0.98v0.98h-0.98zM19.99 19.59h0.98v0.98h-0.98zM23.93 19.59h0.98v0.98h-0.98zM25.90 19.59h0.98v0.98h-0.98zM27.87 19.59h0.98v0.98h-0.98zM28.86 19.59h0.98v0.98h-0.98zM31.81 19.59h0.98v0.98h-0.98zM32.80 19.59h0.98v0.98h-0.98zM34.77 19.59h0.98v0.98h-0.98zM35.75 19.59h0.98v0.98h-0.98zM36.73 19.59h0.98v0.98h-0.98zM37.72 19.59h0.98v0.98h-0.98zM6.20 20.57h0.98v0.98h-0.98zM7.19 20.57h0.98v0.98h-0.98zM8.17 20.57h0.98v0.98h-0.98zM10.14 20.57h0.98v0.98h-0.98zM11.12 20.57h0.98v0.98h-0.98zM12.11 20.57h0.98v0.98h-0.98zM13.09 20.57h0.98v0.98h-0.98zM14.08 20.57h0.98v0.98h-0.98zM15.07 20.57h0.98v0.98h-0.98zM16.05 20.57h0.98v0.98h-0.98zM19.00 20.57h0.98v0.98h-0.98zM19.99 20.57h0.98v0.98h-0.98zM21.96 20.57h0.98v0.98h-0.98zM23.93 20.57h0.98v0.98h-0.98zM24.91 20.57h0.98v0.98h-0.98zM26.88 20.57h0.98v0.98h-0.98zM27.87 20.57h0.98v0.98h-0.98zM30.82 20.57h0.98v0.98h-0.98zM34.77 20.57h0.98v0.98h-0.98zM35.75 20.57h0.98v0.98h-0.98zM36.73 20.57h0.98v0.98h-0.98zM37.72 20.57h0.98v0.98h-0.98zM6.20 21.56h0.98v0.98h-0.98zM8.17 21.56h0.98v0.98h-0.98zM9.16 21.56h0.98v0.98h-0.98zM10.14 21.56h0.98v0.98h-0.98zM14.08 21.56h0.98v0.98h-0.98zM15.07 21.56h0.98v0.98h-0.98zM16.05 21.56h0.98v0.98h-0.98zM17.04 21.56h0.98v0.98h-0.98zM18.02 21.56h0.98v0.98h-0.98zM19.00 21.56h0.98v0.98h-0.98zM19.99 21.56h0.98v0.98h-0.98zM23.93 21.56h0.98v0.98h-0.98zM25.90 21.56h0.98v0.98h-0.98zM26.88 21.56h0.98v0.98h-0.98zM27.87 21.56h0.98v0.98h-0.98zM28.86 21.56h0.98v0.98h-0.98zM29.84 21.56h0.98v0.98h-0.98zM30.82 21.56h0.98v0.98h-0.98zM31.81 21.56h0.98v0.98h-0.98zM32.80 21.56h0.98v0.98h-0.98zM33.78 21.56h0.98v0.98h-0.98zM34.77 21.56h0.98v0.98h-0.98zM35.75 21.56h0.98v0.98h-0.98zM36.73 21.56h0.98v0.98h-0.98zM37.72 21.56h0.98v0.98h-0.98zM6.20 22.55h0.98v0.98h-0.98zM7.19 22.55h0.98v0.98h-0.98zM8.17 22.55h0.98v0.98h-0.98zM15.07 22.55h0.98v0.98h-0.98zM16.05 22.55h0.98v0.98h-0.98zM18.02 22.55h0.98v0.98h-0.98zM20.98 22.55h0.98v0.98h-0.98zM26.88 22.55h0.98v0.98h-0.98zM28.86 22.55h0.98v0.98h-0.98zM36.73 22.55h0.98v0.98h-0.98zM37.72 22.55h0.98v0.98h-0.98zM6.20 23.53h0.98v0.98h-0.98zM7.19 23.53h0.98v0.98h-0.98zM8.17 23.53h0.98v0.98h-0.98zM14.08 23.53h0.98v0.98h-0.98zM15.07 23.53h0.98v0.98h-0.98zM18.02 23.53h0.98v0.98h-0.98zM20.98 23.53h0.98v0.98h-0.98zM22.95 23.53h0.98v0.98h-0.98zM23.93 23.53h0.98v0.98h-0.98zM24.91 23.53h0.98v0.98h-0.98zM26.88 23.53h0.98v0.98h-0.98zM29.84 23.53h0.98v0.98h-0.98zM30.82 23.53h0.98v0.98h-0.98zM31.81 23.53h0.98v0.98h-0.98zM36.73 23.53h0.98v0.98h-0.98zM37.72 23.53h0.98v0.98h-0.98zM6.20 24.52h0.98v0.98h-0.98zM8.17 24.52h0.98v0.98h-0.98zM10.14 24.52h0.98v0.98h-0.98zM11.12 24.52h0.98v0.98h-0.98zM12.11 24.52h0.98v0.98h-0.98zM16.05 24.52h0.98v0.98h-0.98zM17.04 24.52h0.98v0.98h-0.98zM18.02 24.52h0.98v0.98h-0.98zM19.00 24.52h0.98v0.98h-0.98zM19.99 24.52h0.98v0.98h-0.98zM21.96 24.52h0.98v0.98h-0.98zM24.91 24.52h0.98v0.98h-0.98zM25.90 24.52h0.98v0.98h-0.98zM28.86 24.52h0.98v0.98h-0.98zM29.84 24.52h0.98v0.98h-0.98zM30.82 24.52h0.98v0.98h-0.98zM32.80 24.52h0.98v0.98h-0.98zM34.77 24.52h0.98v0.98h-0.98zM37.72 24.52h0.98v0.98h-0.98zM7.19 25.50h0.98v0.98h-0.98zM10.14 25.50h0.98v0.98h-0.98zM12.11 25.50h0.98v0.98h-0.98zM13.09 25.50h0.98v0.98h-0.98zM14.08 25.50h0.98v0.98h-0.98zM15.07 25.50h0.98v0.98h-0.98zM16.05 25.50h0.98v0.98h-0.98zM17.04 25.50h0.98v0.98h-0.98zM18.02 25.50h0.98v0.98h-0.98zM19.00 25.50h0.98v0.98h-0.98zM19.99 25.50h0.98v0.98h-0.98zM21.96 25.50h0.98v0.98h-0.98zM24.91 25.50h0.98v0.98h-0.98zM28.86 25.50h0.98v0.98h-0.98zM29.84 25.50h0.98v0.98h-0.98zM30.82 25.50h0.98v0.98h-0.98zM33.78 25.50h0.98v0.98h-0.98zM34.77 25.50h0.98v0.98h-0.98zM35.75 25.50h0.98v0.98h-0.98zM36.73 25.50h0.98v0.98h-0.98zM37.72 25.50h0.98v0.98h-0.98zM7.19 26.48h0.98v0.98h-0.98zM9.16 26.48h0.98v0.98h-0.98zM10.14 26.48h0.98v0.98h-0.98zM11.12 26.48h0.98v0.98h-0.98zM12.11 26.48h0.98v0.98h-0.98zM13.09 26.48h0.98v0.98h-0.98zM21.96 26.48h0.98v0.98h-0.98zM23.93 26.48h0.98v0.98h-0.98zM26.88 26.48h0.98v0.98h-0.98zM27.87 26.48h0.98v0.98h-0.98zM29.84 26.48h0.98v0.98h-0.98zM30.82 26.48h0.98v0.98h-0.98zM31.81 26.48h0.98v0.98h-0.98zM32.80 26.48h0.98v0.98h-0.98zM35.75 26.48h0.98v0.98h-0.98zM37.72 26.48h0.98v0.98h-0.98zM7.19 27.47h0.98v0.98h-0.98zM8.17 27.47h0.98v0.98h-0.98zM9.16 27.47h0.98v0.98h-0.98zM10.14 27.47h0.98v0.98h-0.98zM12.11 27.47h0.98v0.98h-0.98zM13.09 27.47h0.98v0.98h-0.98zM16.05 27.47h0.98v0.98h-0.98zM17.04 27.47h0.98v0.98h-0.98zM18.02 27.47h0.98v0.98h-0.98zM19.00 27.47h0.98v0.98h-0.98zM19.99 27.47h0.98v0.98h-0.98zM20.98 27.47h0.98v0.98h-0.98zM21.96 27.47h0.98v0.98h-0.98zM22.95 27.47h0.98v0.98h-0.98zM26.88 27.47h0.98v0.98h-0.98zM27.87 27.47h0.98v0.98h-0.98zM29.84 27.47h0.98v0.98h-0.98zM30.82 27.47h0.98v0.98h-0.98zM31.81 27.47h0.98v0.98h-0.98zM32.80 27.47h0.98v0.98h-0.98zM34.77 27.47h0.98v0.98h-0.98zM35.75 27.47h0.98v0.98h-0.98zM6.20 28.46h0.98v0.98h-0.98zM7.19 28.46h0.98v0.98h-0.98zM8.17 28.46h0.98v0.98h-0.98zM9.16 28.46h0.98v0.98h-0.98zM10.14 28.46h0.98v0.98h-0.98zM14.08 28.46h0.98v0.98h-0.98zM15.07 28.46h0.98v0.98h-0.98zM18.02 28.46h0.98v0.98h-0.98zM19.99 28.46h0.98v0.98h-0.98zM20.98 28.46h0.98v0.98h-0.98zM25.90 28.46h0.98v0.98h-0.98zM26.88 28.46h0.98v0.98h-0.98zM27.87 28.46h0.98v0.98h-0.98zM34.77 28.46h0.98v0.98h-0.98zM36.73 28.46h0.98v0.98h-0.98zM6.20 29.44h0.98v0.98h-0.98zM9.16 29.44h0.98v0.98h-0.98zM10.14 29.44h0.98v0.98h-0.98zM11.12 29.44h0.98v0.98h-0.98zM14.08 29.44h0.98v0.98h-0.98zM15.07 29.44h0.98v0.98h-0.98zM18.02 29.44h0.98v0.98h-0.98zM19.00 29.44h0.98v0.98h-0.98zM20.98 29.44h0.98v0.98h-0.98zM21.96 29.44h0.98v0.98h-0.98zM22.95 29.44h0.98v0.98h-0.98zM26.88 29.44h0.98v0.98h-0.98zM27.87 29.44h0.98v0.98h-0.98zM28.86 29.44h0.98v0.98h-0.98zM31.81 29.44h0.98v0.98h-0.98zM32.80 29.44h0.98v0.98h-0.98zM33.78 29.44h0.98v0.98h-0.98zM35.75 29.44h0.98v0.98h-0.98zM36.73 29.44h0.98v0.98h-0.98zM15.07 30.43h0.98v0.98h-0.98zM16.05 30.43h0.98v0.98h-0.98zM17.04 30.43h0.98v0.98h-0.98zM18.02 30.43h0.98v0.98h-0.98zM19.99 30.43h0.98v0.98h-0.98zM22.95 30.43h0.98v0.98h-0.98zM23.93 30.43h0.98v0.98h-0.98zM25.90 30.43h0.98v0.98h-0.98zM27.87 30.43h0.98v0.98h-0.98zM28.86 30.43h0.98v0.98h-0.98zM30.82 30.43h0.98v0.98h-0.98zM32.80 30.43h0.98v0.98h-0.98zM33.78 30.43h0.98v0.98h-0.98zM34.77 30.43h0.98v0.98h-0.98zM35.75 30.43h0.98v0.98h-0.98zM14.08 31.41h0.98v0.98h-0.98zM15.07 31.41h0.98v0.98h-0.98zM16.05 31.41h0.98v0.98h-0.98zM18.02 31.41h0.98v0.98h-0.98zM19.00 31.41h0.98v0.98h-0.98zM19.99 31.41h0.98v0.98h-0.98zM20.98 31.41h0.98v0.98h-0.98zM26.88 31.41h0.98v0.98h-0.98zM27.87 31.41h0.98v0.98h-0.98zM30.82 31.41h0.98v0.98h-0.98zM32.80 31.41h0.98v0.98h-0.98zM33.78 31.41h0.98v0.98h-0.98zM34.77 31.41h0.98v0.98h-0.98zM35.75 31.41h0.98v0.98h-0.98zM36.73 31.41h0.98v0.98h-0.98zM37.72 31.41h0.98v0.98h-0.98zM14.08 32.39h0.98v0.98h-0.98zM16.05 32.39h0.98v0.98h-0.98zM18.02 32.39h0.98v0.98h-0.98zM19.00 32.39h0.98v0.98h-0.98zM21.96 32.39h0.98v0.98h-0.98zM22.95 32.39h0.98v0.98h-0.98zM23.93 32.39h0.98v0.98h-0.98zM24.91 32.39h0.98v0.98h-0.98zM26.88 32.39h0.98v0.98h-0.98zM27.87 32.39h0.98v0.98h-0.98zM29.84 32.39h0.98v0.98h-0.98zM30.82 32.39h0.98v0.98h-0.98zM33.78 32.39h0.98v0.98h-0.98zM34.77 32.39h0.98v0.98h-0.98zM35.75 32.39h0.98v0.98h-0.98zM37.72 32.39h0.98v0.98h-0.98zM16.05 33.38h0.98v0.98h-0.98zM17.04 33.38h0.98v0.98h-0.98zM19.99 33.38h0.98v0.98h-0.98zM21.96 33.38h0.98v0.98h-0.98zM22.95 33.38h0.98v0.98h-0.98zM23.93 33.38h0.98v0.98h-0.98zM28.86 33.38h0.98v0.98h-0.98zM29.84 33.38h0.98v0.98h-0.98zM30.82 33.38h0.98v0.98h-0.98zM33.78 33.38h0.98v0.98h-0.98zM34.77 33.38h0.98v0.98h-0.98zM35.75 33.38h0.98v0.98h-0.98zM36.73 33.38h0.98v0.98h-0.98zM14.08 34.37h0.98v0.98h-0.98zM19.99 34.37h0.98v0.98h-0.98zM20.98 34.37h0.98v0.98h-0.98zM21.96 34.37h0.98v0.98h-0.98zM23.93 34.37h0.98v0.98h-0.98zM24.91 34.37h0.98v0.98h-0.98zM26.88 34.37h0.98v0.98h-0.98zM27.87 34.37h0.98v0.98h-0.98zM28.86 34.37h0.98v0.98h-0.98zM30.82 34.37h0.98v0.98h-0.98zM34.77 34.37h0.98v0.98h-0.98zM35.75 34.37h0.98v0.98h-0.98zM36.73 34.37h0.98v0.98h-0.98zM37.72 34.37h0.98v0.98h-0.98zM15.07 35.35h0.98v0.98h-0.98zM16.05 35.35h0.98v0.98h-0.98zM17.04 35.35h0.98v0.98h-0.98zM22.95 35.35h0.98v0.98h-0.98zM24.91 35.35h0.98v0.98h-0.98zM26.88 35.35h0.98v0.98h-0.98zM28.86 35.35h0.98v0.98h-0.98zM29.84 35.35h0.98v0.98h-0.98zM30.82 35.35h0.98v0.98h-0.98zM31.81 35.35h0.98v0.98h-0.98zM34.77 35.35h0.98v0.98h-0.98zM35.75 35.35h0.98v0.98h-0.98zM37.72 35.35h0.98v0.98h-0.98zM14.08 36.34h0.98v0.98h-0.98zM18.02 36.34h0.98v0.98h-0.98zM19.00 36.34h0.98v0.98h-0.98zM22.95 36.34h0.98v0.98h-0.98zM23.93 36.34h0.98v0.98h-0.98zM24.91 36.34h0.98v0.98h-0.98zM25.90 36.34h0.98v0.98h-0.98zM29.84 36.34h0.98v0.98h-0.98zM31.81 36.34h0.98v0.98h-0.98zM32.80 36.34h0.98v0.98h-0.98zM35.75 36.34h0.98v0.98h-0.98zM14.08 37.32h0.98v0.98h-0.98zM15.07 37.32h0.98v0.98h-0.98zM16.05 37.32h0.98v0.98h-0.98zM17.04 37.32h0.98v0.98h-0.98zM18.02 37.32h0.98v0.98h-0.98zM20.98 37.32h0.98v0.98h-0.98zM21.96 37.32h0.98v0.98h-0.98zM22.95 37.32h0.98v0.98h-0.98zM24.91 37.32h0.98v0.98h-0.98zM25.90 37.32h0.98v0.98h-0.98zM26.88 37.32h0.98v0.98h-0.98zM29.84 37.32h0.98v0.98h-0.98zM30.82 37.32h0.98v0.98h-0.98zM31.81 37.32h0.98v0.98h-0.98zM34.77 37.32h0.98v0.98h-0.98zM35.75 37.32h0.98v0.98h-0.98zM37.72 37.32h0.98v0.98h-0.98z" fill="#111"/><rect x="6.20" y="5.80" width="6.89" height="6.89" fill="#111"/><rect x="7.19" y="6.79" width="4.92" height="4.92" fill="#e9ebf5"/><rect x="8.17" y="7.77" width="2.96" height="2.96" fill="#111"/><rect x="31.81" y="5.80" width="6.89" height="6.89" fill="#111"/><rect x="32.80" y="6.79" width="4.92" height="4.92" fill="#e9ebf5"/><rect x="33.78" y="7.77" width="2.96" height="2.96" fill="#111"/><rect x="6.20" y="31.41" width="6.89" height="6.89" fill="#111"/><rect x="7.19" y="32.39" width="4.92" height="4.92" fill="#e9ebf5"/><rect x="8.17" y="33.38" width="2.96" height="2.96" fill="#111"/></svg><div class="t" style="left:571px;top:424.4px;font-size:13.4px;font-style:italic;font-family:'Liberation Serif',serif;color:#111;letter-spacing:-1.1px;transform:rotate(-4deg) skewX(-12deg);transform-origin:left top">HBakkali</div><svg style="left:570px;top:438px" width="44" height="10"><path d="M2 3 C12 2 26 1.2 40 1 M10 6.4 C16 7.4 22 7.2 27 6.2" stroke="#111" stroke-width="0.9" fill="none"/></svg>
<div class="gv" style="left:190.05px"></div><div class="gv" style="left:277.85px"></div><div class="gv" style="left:379.25px"></div><div class="gv" style="left:641.55px"></div><div class="gv" style="left:649.15px"></div><div class="gh" style="top:144.70px"></div><div class="gh" style="top:169.30px"></div><div class="gh" style="top:437.30px"></div><div class="gh" style="top:446.00px"></div><div class="gh" style="top:460.80px"></div>
<div class="a" style="left:27px;top:39px;width:887px;height:12px;background:#4c4c4c;"></div><div class="a" style="left:27px;top:39px;width:12px;height:551px;background:#4c4c4c;"></div><div class="a" style="left:27px;top:39px;width:12px;height:12px;background:#555;"></div><svg class="a" style="left:0;top:0" width="1024" height="600"><rect x="42.18" y="49" width="1" height="2" fill="#484848"/><rect x="47.61" y="49" width="1" height="2" fill="#484848"/><text x="39.4" y="48.8" font-size="6.6" fill="#b4b4b4" font-family="Liberation Sans, sans-serif">00</text><rect x="53.05" y="39" width="1" height="12" fill="#3e3e3e"/><rect x="58.49" y="49" width="1" height="2" fill="#484848"/><rect x="63.93" y="49" width="1" height="2" fill="#484848"/><rect x="69.36" y="49" width="1" height="2" fill="#484848"/><text x="55.15" y="48.8" font-size="6.6" fill="#b4b4b4" font-family="Liberation Sans, sans-serif">1000</text><rect x="74.80" y="39" width="1" height="12" fill="#3e3e3e"/><rect x="80.24" y="49" width="1" height="2" fill="#484848"/><rect x="85.68" y="49" width="1" height="2" fill="#484848"/><rect x="91.11" y="49" width="1" height="2" fill="#484848"/><text x="76.90" y="48.8" font-size="6.6" fill="#b4b4b4" font-family="Liberation Sans, sans-serif">800</text><rect x="96.55" y="39" width="1" height="12" fill="#3e3e3e"/><rect x="101.99" y="49" width="1" height="2" fill="#484848"/><rect x="107.43" y="49" width="1" height="2" fill="#484848"/><rect x="112.86" y="49" width="1" height="2" fill="#484848"/><text x="98.65" y="48.8" font-size="6.6" fill="#b4b4b4" font-family="Liberation Sans, sans-serif">600</text><rect x="118.30" y="39" width="1" height="12" fill="#3e3e3e"/><rect x="123.74" y="49" width="1" height="2" fill="#484848"/><rect x="129.18" y="49" width="1" height="2" fill="#484848"/><rect x="134.61" y="49" width="1" height="2" fill="#484848"/><text x="120.40" y="48.8" font-size="6.6" fill="#b4b4b4" font-family="Liberation Sans, sans-serif">400</text><rect x="140.05" y="39" width="1" height="12" fill="#3e3e3e"/><rect x="145.49" y="49" width="1" height="2" fill="#484848"/><rect x="150.93" y="49" width="1" height="2" fill="#484848"/><rect x="156.36" y="49" width="1" height="2" fill="#484848"/><text x="142.15" y="48.8" font-size="6.6" fill="#b4b4b4" font-family="Liberation Sans, sans-serif">200</text><rect x="161.80" y="39" width="1" height="12" fill="#3e3e3e"/><rect x="167.24" y="49" width="1" height="2" fill="#484848"/><rect x="172.68" y="49" width="1" height="2" fill="#484848"/><rect x="178.11" y="49" width="1" height="2" fill="#484848"/><text x="163.90" y="48.8" font-size="6.6" fill="#b4b4b4" font-family="Liberation Sans, sans-serif">0</text><rect x="183.55" y="39" width="1" height="12" fill="#3e3e3e"/><rect x="188.99" y="49" width="1" height="2" fill="#484848"/><rect x="194.43" y="49" width="1" height="2" fill="#484848"/><rect x="199.86" y="49" width="1" height="2" fill="#484848"/><text x="185.65" y="48.8" font-size="6.6" fill="#b4b4b4" font-family="Liberation Sans, sans-serif">200</text><rect x="205.30" y="39" width="1" height="12" fill="#3e3e3e"/><rect x="210.74" y="49" width="1" height="2" fill="#484848"/><rect x="216.18" y="49" width="1" height="2" fill="#484848"/><rect x="221.61" y="49" width="1" height="2" fill="#484848"/><text x="207.40" y="48.8" font-size="6.6" fill="#b4b4b4" font-family="Liberation Sans, sans-serif">400</text><rect x="227.05" y="39" width="1" height="12" fill="#3e3e3e"/><rect x="232.49" y="49" width="1" height="2" fill="#484848"/><rect x="237.93" y="49" width="1" height="2" fill="#484848"/><rect x="243.36" y="49" width="1" height="2" fill="#484848"/><text x="229.15" y="48.8" font-size="6.6" fill="#b4b4b4" font-family="Liberation Sans, sans-serif">600</text><rect x="248.80" y="39" width="1" height="12" fill="#3e3e3e"/><rect x="254.24" y="49" width="1" height="2" fill="#484848"/><rect x="259.68" y="49" width="1" height="2" fill="#484848"/><rect x="265.11" y="49" width="1" height="2" fill="#484848"/><text x="250.90" y="48.8" font-size="6.6" fill="#b4b4b4" font-family="Liberation Sans, sans-serif">800</text><rect x="270.55" y="39" width="1" height="12" fill="#3e3e3e"/><rect x="275.99" y="49" width="1" height="2" fill="#484848"/><rect x="281.43" y="49" width="1" height="2" fill="#484848"/><rect x="286.86" y="49" width="1" height="2" fill="#484848"/><text x="272.65" y="48.8" font-size="6.6" fill="#b4b4b4" font-family="Liberation Sans, sans-serif">1000</text><rect x="292.30" y="39" width="1" height="12" fill="#3e3e3e"/><rect x="297.74" y="49" width="1" height="2" fill="#484848"/><rect x="303.18" y="49" width="1" height="2" fill="#484848"/><rect x="308.61" y="49" width="1" height="2" fill="#484848"/><text x="294.40" y="48.8" font-size="6.6" fill="#b4b4b4" font-family="Liberation Sans, sans-serif">1200</text><rect x="314.05" y="39" width="1" height="12" fill="#3e3e3e"/><rect x="319.49" y="49" width="1" height="2" fill="#484848"/><rect x="324.93" y="49" width="1" height="2" fill="#484848"/><rect x="330.36" y="49" width="1" height="2" fill="#484848"/><text x="316.15" y="48.8" font-size="6.6" fill="#b4b4b4" font-family="Liberation Sans, sans-serif">1400</text><rect x="335.80" y="39" width="1" height="12" fill="#3e3e3e"/><rect x="341.24" y="49" width="1" height="2" fill="#484848"/><rect x="346.68" y="49" width="1" height="2" fill="#484848"/><rect x="352.11" y="49" width="1" height="2" fill="#484848"/><text x="337.90" y="48.8" font-size="6.6" fill="#b4b4b4" font-family="Liberation Sans, sans-serif">1600</text><rect x="357.55" y="39" width="1" height="12" fill="#3e3e3e"/><rect x="362.99" y="49" width="1" height="2" fill="#484848"/><rect x="368.43" y="49" width="1" height="2" fill="#484848"/><rect x="373.86" y="49" width="1" height="2" fill="#484848"/><text x="359.65" y="48.8" font-size="6.6" fill="#b4b4b4" font-family="Liberation Sans, sans-serif">1800</text><rect x="379.30" y="39" width="1" height="12" fill="#3e3e3e"/><rect x="384.74" y="49" width="1" height="2" fill="#484848"/><rect x="390.18" y="49" width="1" height="2" fill="#484848"/><rect x="395.61" y="49" width="1" height="2" fill="#484848"/><text x="381.40" y="48.8" font-size="6.6" fill="#b4b4b4" font-family="Liberation Sans, sans-serif">2000</text><rect x="401.05" y="39" width="1" height="12" fill="#3e3e3e"/><rect x="406.49" y="49" width="1" height="2" fill="#484848"/><rect x="411.93" y="49" width="1" height="2" fill="#484848"/><rect x="417.36" y="49" width="1" height="2" fill="#484848"/><text x="403.15" y="48.8" font-size="6.6" fill="#b4b4b4" font-family="Liberation Sans, sans-serif">2200</text><rect x="422.80" y="39" width="1" height="12" fill="#3e3e3e"/><rect x="428.24" y="49" width="1" height="2" fill="#484848"/><rect x="433.68" y="49" width="1" height="2" fill="#484848"/><rect x="439.11" y="49" width="1" height="2" fill="#484848"/><text x="424.90" y="48.8" font-size="6.6" fill="#b4b4b4" font-family="Liberation Sans, sans-serif">2400</text><rect x="444.55" y="39" width="1" height="12" fill="#3e3e3e"/><rect x="449.99" y="49" width="1" height="2" fill="#484848"/><rect x="455.43" y="49" width="1" height="2" fill="#484848"/><rect x="460.86" y="49" width="1" height="2" fill="#484848"/><text x="446.65" y="48.8" font-size="6.6" fill="#b4b4b4" font-family="Liberation Sans, sans-serif">2600</text><rect x="466.30" y="39" width="1" height="12" fill="#3e3e3e"/><rect x="471.74" y="49" width="1" height="2" fill="#484848"/><rect x="477.18" y="49" width="1" height="2" fill="#484848"/><rect x="482.61" y="49" width="1" height="2" fill="#484848"/><text x="468.40" y="48.8" font-size="6.6" fill="#b4b4b4" font-family="Liberation Sans, sans-serif">2800</text><rect x="488.05" y="39" width="1" height="12" fill="#3e3e3e"/><rect x="493.49" y="49" width="1" height="2" fill="#484848"/><rect x="498.93" y="49" width="1" height="2" fill="#484848"/><rect x="504.36" y="49" width="1" height="2" fill="#484848"/><text x="490.15" y="48.8" font-size="6.6" fill="#b4b4b4" font-family="Liberation Sans, sans-serif">3000</text><rect x="509.80" y="39" width="1" height="12" fill="#3e3e3e"/><rect x="515.24" y="49" width="1" height="2" fill="#484848"/><rect x="520.67" y="49" width="1" height="2" fill="#484848"/><rect x="526.11" y="49" width="1" height="2" fill="#484848"/><text x="511.90" y="48.8" font-size="6.6" fill="#b4b4b4" font-family="Liberation Sans, sans-serif">3200</text><rect x="531.55" y="39" width="1" height="12" fill="#3e3e3e"/><rect x="536.99" y="49" width="1" height="2" fill="#484848"/><rect x="542.42" y="49" width="1" height="2" fill="#484848"/><rect x="547.86" y="49" width="1" height="2" fill="#484848"/><text x="533.65" y="48.8" font-size="6.6" fill="#b4b4b4" font-family="Liberation Sans, sans-serif">3400</text><rect x="553.30" y="39" width="1" height="12" fill="#3e3e3e"/><rect x="558.74" y="49" width="1" height="2" fill="#484848"/><rect x="564.17" y="49" width="1" height="2" fill="#484848"/><rect x="569.61" y="49" width="1" height="2" fill="#484848"/><text x="555.40" y="48.8" font-size="6.6" fill="#b4b4b4" font-family="Liberation Sans, sans-serif">3600</text><rect x="575.05" y="39" width="1" height="12" fill="#3e3e3e"/><rect x="580.49" y="49" width="1" height="2" fill="#484848"/><rect x="585.92" y="49" width="1" height="2" fill="#484848"/><rect x="591.36" y="49" width="1" height="2" fill="#484848"/><text x="577.15" y="48.8" font-size="6.6" fill="#b4b4b4" font-family="Liberation Sans, sans-serif">3800</text><rect x="596.80" y="39" width="1" height="12" fill="#3e3e3e"/><rect x="602.24" y="49" width="1" height="2" fill="#484848"/><rect x="607.67" y="49" width="1" height="2" fill="#484848"/><rect x="613.11" y="49" width="1" height="2" fill="#484848"/><text x="598.90" y="48.8" font-size="6.6" fill="#b4b4b4" font-family="Liberation Sans, sans-serif">4000</text><rect x="618.55" y="39" width="1" height="12" fill="#3e3e3e"/><rect x="623.99" y="49" width="1" height="2" fill="#484848"/><rect x="629.42" y="49" width="1" height="2" fill="#484848"/><rect x="634.86" y="49" width="1" height="2" fill="#484848"/><text x="620.65" y="48.8" font-size="6.6" fill="#b4b4b4" font-family="Liberation Sans, sans-serif">4200</text><rect x="640.30" y="39" width="1" height="12" fill="#3e3e3e"/><rect x="645.74" y="49" width="1" height="2" fill="#484848"/><rect x="651.17" y="49" width="1" height="2" fill="#484848"/><rect x="656.61" y="49" width="1" height="2" fill="#484848"/><text x="642.40" y="48.8" font-size="6.6" fill="#b4b4b4" font-family="Liberation Sans, sans-serif">4400</text><rect x="662.05" y="39" width="1" height="12" fill="#3e3e3e"/><rect x="667.49" y="49" width="1" height="2" fill="#484848"/><rect x="672.92" y="49" width="1" height="2" fill="#484848"/><rect x="678.36" y="49" width="1" height="2" fill="#484848"/><text x="664.15" y="48.8" font-size="6.6" fill="#b4b4b4" font-family="Liberation Sans, sans-serif">4600</text><rect x="683.80" y="39" width="1" height="12" fill="#3e3e3e"/><rect x="689.24" y="49" width="1" height="2" fill="#484848"/><rect x="694.67" y="49" width="1" height="2" fill="#484848"/><rect x="700.11" y="49" width="1" height="2" fill="#484848"/><text x="685.90" y="48.8" font-size="6.6" fill="#b4b4b4" font-family="Liberation Sans, sans-serif">4800</text><rect x="705.55" y="39" width="1" height="12" fill="#3e3e3e"/><rect x="710.99" y="49" width="1" height="2" fill="#484848"/><rect x="716.42" y="49" width="1" height="2" fill="#484848"/><rect x="721.86" y="49" width="1" height="2" fill="#484848"/><text x="707.65" y="48.8" font-size="6.6" fill="#b4b4b4" font-family="Liberation Sans, sans-serif">5000</text><rect x="727.30" y="39" width="1" height="12" fill="#3e3e3e"/><rect x="732.74" y="49" width="1" height="2" fill="#484848"/><rect x="738.17" y="49" width="1" height="2" fill="#484848"/><rect x="743.61" y="49" width="1" height="2" fill="#484848"/><text x="729.40" y="48.8" font-size="6.6" fill="#b4b4b4" font-family="Liberation Sans, sans-serif">5200</text><rect x="749.05" y="39" width="1" height="12" fill="#3e3e3e"/><rect x="754.49" y="49" width="1" height="2" fill="#484848"/><rect x="759.92" y="49" width="1" height="2" fill="#484848"/><rect x="765.36" y="49" width="1" height="2" fill="#484848"/><text x="751.15" y="48.8" font-size="6.6" fill="#b4b4b4" font-family="Liberation Sans, sans-serif">5400</text><rect x="770.80" y="39" width="1" height="12" fill="#3e3e3e"/><rect x="776.24" y="49" width="1" height="2" fill="#484848"/><rect x="781.67" y="49" width="1" height="2" fill="#484848"/><rect x="787.11" y="49" width="1" height="2" fill="#484848"/><text x="772.90" y="48.8" font-size="6.6" fill="#b4b4b4" font-family="Liberation Sans, sans-serif">5600</text><rect x="792.55" y="39" width="1" height="12" fill="#3e3e3e"/><rect x="797.99" y="49" width="1" height="2" fill="#484848"/><rect x="803.42" y="49" width="1" height="2" fill="#484848"/><rect x="808.86" y="49" width="1" height="2" fill="#484848"/><text x="794.65" y="48.8" font-size="6.6" fill="#b4b4b4" font-family="Liberation Sans, sans-serif">5800</text><rect x="814.30" y="39" width="1" height="12" fill="#3e3e3e"/><rect x="819.74" y="49" width="1" height="2" fill="#484848"/><rect x="825.17" y="49" width="1" height="2" fill="#484848"/><rect x="830.61" y="49" width="1" height="2" fill="#484848"/><text x="816.40" y="48.8" font-size="6.6" fill="#b4b4b4" font-family="Liberation Sans, sans-serif">6000</text><rect x="836.05" y="39" width="1" height="12" fill="#3e3e3e"/><rect x="841.49" y="49" width="1" height="2" fill="#484848"/><rect x="846.92" y="49" width="1" height="2" fill="#484848"/><rect x="852.36" y="49" width="1" height="2" fill="#484848"/><text x="838.15" y="48.8" font-size="6.6" fill="#b4b4b4" font-family="Liberation Sans, sans-serif">6200</text><rect x="857.80" y="39" width="1" height="12" fill="#3e3e3e"/><rect x="863.24" y="49" width="1" height="2" fill="#484848"/><rect x="868.67" y="49" width="1" height="2" fill="#484848"/><rect x="874.11" y="49" width="1" height="2" fill="#484848"/><text x="859.90" y="48.8" font-size="6.6" fill="#b4b4b4" font-family="Liberation Sans, sans-serif">6400</text><rect x="879.55" y="39" width="1" height="12" fill="#3e3e3e"/><rect x="884.99" y="49" width="1" height="2" fill="#484848"/><rect x="890.42" y="49" width="1" height="2" fill="#484848"/><rect x="895.86" y="49" width="1" height="2" fill="#484848"/><text x="881.65" y="48.8" font-size="6.6" fill="#b4b4b4" font-family="Liberation Sans, sans-serif">6600</text><rect x="901.30" y="39" width="1" height="12" fill="#3e3e3e"/><rect x="906.74" y="49" width="1" height="2" fill="#484848"/><rect x="912.17" y="49" width="1" height="2" fill="#484848"/><text x="903.40" y="48.8" font-size="6.6" fill="#b4b4b4" font-family="Liberation Sans, sans-serif">6800</text><rect x="37" y="55.38" width="2" height="1" fill="#484848"/><rect x="37" y="60.81" width="2" height="1" fill="#484848"/><text transform="translate(31.8 54.70) scale(0.86 0.66)" font-size="6.9" fill="#b2b2b2" font-family="Liberation Sans, sans-serif">0</text><text transform="translate(31.8 59.10) scale(0.86 0.66)" font-size="6.9" fill="#b2b2b2" font-family="Liberation Sans, sans-serif">0</text><rect x="27" y="66.25" width="12" height="1" fill="#3e3e3e"/><rect x="37" y="71.69" width="2" height="1" fill="#484848"/><rect x="37" y="77.12" width="2" height="1" fill="#484848"/><rect x="37" y="82.56" width="2" height="1" fill="#484848"/><text transform="translate(31.8 72.05) scale(0.86 0.66)" font-size="6.9" fill="#b2b2b2" font-family="Liberation Sans, sans-serif">6</text><text transform="translate(31.8 76.45) scale(0.86 0.66)" font-size="6.9" fill="#b2b2b2" font-family="Liberation Sans, sans-serif">0</text><text transform="translate(31.8 80.85) scale(0.86 0.66)" font-size="6.9" fill="#b2b2b2" font-family="Liberation Sans, sans-serif">0</text><rect x="27" y="88.00" width="12" height="1" fill="#3e3e3e"/><rect x="37" y="93.44" width="2" height="1" fill="#484848"/><rect x="37" y="98.88" width="2" height="1" fill="#484848"/><rect x="37" y="104.31" width="2" height="1" fill="#484848"/><text transform="translate(31.8 93.80) scale(0.86 0.66)" font-size="6.9" fill="#b2b2b2" font-family="Liberation Sans, sans-serif">4</text><text transform="translate(31.8 98.20) scale(0.86 0.66)" font-size="6.9" fill="#b2b2b2" font-family="Liberation Sans, sans-serif">0</text><text transform="translate(31.8 102.60) scale(0.86 0.66)" font-size="6.9" fill="#b2b2b2" font-family="Liberation Sans, sans-serif">0</text><rect x="27" y="109.75" width="12" height="1" fill="#3e3e3e"/><rect x="37" y="115.19" width="2" height="1" fill="#484848"/><rect x="37" y="120.62" width="2" height="1" fill="#484848"/><rect x="37" y="126.06" width="2" height="1" fill="#484848"/><text transform="translate(31.8 115.55) scale(0.86 0.66)" font-size="6.9" fill="#b2b2b2" font-family="Liberation Sans, sans-serif">2</text><text transform="translate(31.8 119.95) scale(0.86 0.66)" font-size="6.9" fill="#b2b2b2" font-family="Liberation Sans, sans-serif">0</text><text transform="translate(31.8 124.35) scale(0.86 0.66)" font-size="6.9" fill="#b2b2b2" font-family="Liberation Sans, sans-serif">0</text><rect x="27" y="131.50" width="12" height="1" fill="#3e3e3e"/><rect x="37" y="136.94" width="2" height="1" fill="#484848"/><rect x="37" y="142.38" width="2" height="1" fill="#484848"/><rect x="37" y="147.81" width="2" height="1" fill="#484848"/><text transform="translate(31.8 137.30) scale(0.86 0.66)" font-size="6.9" fill="#b2b2b2" font-family="Liberation Sans, sans-serif">0</text><rect x="27" y="153.25" width="12" height="1" fill="#3e3e3e"/><rect x="37" y="158.69" width="2" height="1" fill="#484848"/><rect x="37" y="164.12" width="2" height="1" fill="#484848"/><rect x="37" y="169.56" width="2" height="1" fill="#484848"/><text transform="translate(31.8 159.05) scale(0.86 0.66)" font-size="6.9" fill="#b2b2b2" font-family="Liberation Sans, sans-serif">2</text><text transform="translate(31.8 163.45) scale(0.86 0.66)" font-size="6.9" fill="#b2b2b2" font-family="Liberation Sans, sans-serif">0</text><text transform="translate(31.8 167.85) scale(0.86 0.66)" font-size="6.9" fill="#b2b2b2" font-family="Liberation Sans, sans-serif">0</text><rect x="27" y="175.00" width="12" height="1" fill="#3e3e3e"/><rect x="37" y="180.44" width="2" height="1" fill="#484848"/><rect x="37" y="185.88" width="2" height="1" fill="#484848"/><rect x="37" y="191.31" width="2" height="1" fill="#484848"/><text transform="translate(31.8 180.80) scale(0.86 0.66)" font-size="6.9" fill="#b2b2b2" font-family="Liberation Sans, sans-serif">4</text><text transform="translate(31.8 185.20) scale(0.86 0.66)" font-size="6.9" fill="#b2b2b2" font-family="Liberation Sans, sans-serif">0</text><text transform="translate(31.8 189.60) scale(0.86 0.66)" font-size="6.9" fill="#b2b2b2" font-family="Liberation Sans, sans-serif">0</text><rect x="27" y="196.75" width="12" height="1" fill="#3e3e3e"/><rect x="37" y="202.19" width="2" height="1" fill="#484848"/><rect x="37" y="207.62" width="2" height="1" fill="#484848"/><rect x="37" y="213.06" width="2" height="1" fill="#484848"/><text transform="translate(31.8 202.55) scale(0.86 0.66)" font-size="6.9" fill="#b2b2b2" font-family="Liberation Sans, sans-serif">6</text><text transform="translate(31.8 206.95) scale(0.86 0.66)" font-size="6.9" fill="#b2b2b2" font-family="Liberation Sans, sans-serif">0</text><text transform="translate(31.8 211.35) scale(0.86 0.66)" font-size="6.9" fill="#b2b2b2" font-family="Liberation Sans, sans-serif">0</text><rect x="27" y="218.50" width="12" height="1" fill="#3e3e3e"/><rect x="37" y="223.94" width="2" height="1" fill="#484848"/><rect x="37" y="229.38" width="2" height="1" fill="#484848"/><rect x="37" y="234.81" width="2" height="1" fill="#484848"/><text transform="translate(31.8 224.30) scale(0.86 0.66)" font-size="6.9" fill="#b2b2b2" font-family="Liberation Sans, sans-serif">8</text><text transform="translate(31.8 228.70) scale(0.86 0.66)" font-size="6.9" fill="#b2b2b2" font-family="Liberation Sans, sans-serif">0</text><text transform="translate(31.8 233.10) scale(0.86 0.66)" font-size="6.9" fill="#b2b2b2" font-family="Liberation Sans, sans-serif">0</text><rect x="27" y="240.25" width="12" height="1" fill="#3e3e3e"/><rect x="37" y="245.69" width="2" height="1" fill="#484848"/><rect x="37" y="251.12" width="2" height="1" fill="#484848"/><rect x="37" y="256.56" width="2" height="1" fill="#484848"/><text transform="translate(31.8 246.05) scale(0.86 0.66)" font-size="6.9" fill="#b2b2b2" font-family="Liberation Sans, sans-serif">1</text><text transform="translate(31.8 250.45) scale(0.86 0.66)" font-size="6.9" fill="#b2b2b2" font-family="Liberation Sans, sans-serif">0</text><text transform="translate(31.8 254.85) scale(0.86 0.66)" font-size="6.9" fill="#b2b2b2" font-family="Liberation Sans, sans-serif">0</text><text transform="translate(31.8 259.25) scale(0.86 0.66)" font-size="6.9" fill="#b2b2b2" font-family="Liberation Sans, sans-serif">0</text><rect x="27" y="262.00" width="12" height="1" fill="#3e3e3e"/><rect x="37" y="267.44" width="2" height="1" fill="#484848"/><rect x="37" y="272.88" width="2" height="1" fill="#484848"/><rect x="37" y="278.31" width="2" height="1" fill="#484848"/><text transform="translate(31.8 267.80) scale(0.86 0.66)" font-size="6.9" fill="#b2b2b2" font-family="Liberation Sans, sans-serif">1</text><text transform="translate(31.8 272.20) scale(0.86 0.66)" font-size="6.9" fill="#b2b2b2" font-family="Liberation Sans, sans-serif">2</text><text transform="translate(31.8 276.60) scale(0.86 0.66)" font-size="6.9" fill="#b2b2b2" font-family="Liberation Sans, sans-serif">0</text><text transform="translate(31.8 281.00) scale(0.86 0.66)" font-size="6.9" fill="#b2b2b2" font-family="Liberation Sans, sans-serif">0</text><rect x="27" y="283.75" width="12" height="1" fill="#3e3e3e"/><rect x="37" y="289.19" width="2" height="1" fill="#484848"/><rect x="37" y="294.62" width="2" height="1" fill="#484848"/><rect x="37" y="300.06" width="2" height="1" fill="#484848"/><text transform="translate(31.8 289.55) scale(0.86 0.66)" font-size="6.9" fill="#b2b2b2" font-family="Liberation Sans, sans-serif">1</text><text transform="translate(31.8 293.95) scale(0.86 0.66)" font-size="6.9" fill="#b2b2b2" font-family="Liberation Sans, sans-serif">4</text><text transform="translate(31.8 298.35) scale(0.86 0.66)" font-size="6.9" fill="#b2b2b2" font-family="Liberation Sans, sans-serif">0</text><text transform="translate(31.8 302.75) scale(0.86 0.66)" font-size="6.9" fill="#b2b2b2" font-family="Liberation Sans, sans-serif">0</text><rect x="27" y="305.50" width="12" height="1" fill="#3e3e3e"/><rect x="37" y="310.94" width="2" height="1" fill="#484848"/><rect x="37" y="316.38" width="2" height="1" fill="#484848"/><rect x="37" y="321.81" width="2" height="1" fill="#484848"/><text transform="translate(31.8 311.30) scale(0.86 0.66)" font-size="6.9" fill="#b2b2b2" font-family="Liberation Sans, sans-serif">1</text><text transform="translate(31.8 315.70) scale(0.86 0.66)" font-size="6.9" fill="#b2b2b2" font-family="Liberation Sans, sans-serif">6</text><text transform="translate(31.8 320.10) scale(0.86 0.66)" font-size="6.9" fill="#b2b2b2" font-family="Liberation Sans, sans-serif">0</text><text transform="translate(31.8 324.50) scale(0.86 0.66)" font-size="6.9" fill="#b2b2b2" font-family="Liberation Sans, sans-serif">0</text><rect x="27" y="327.25" width="12" height="1" fill="#3e3e3e"/><rect x="37" y="332.69" width="2" height="1" fill="#484848"/><rect x="37" y="338.12" width="2" height="1" fill="#484848"/><rect x="37" y="343.56" width="2" height="1" fill="#484848"/><text transform="translate(31.8 333.05) scale(0.86 0.66)" font-size="6.9" fill="#b2b2b2" font-family="Liberation Sans, sans-serif">1</text><text transform="translate(31.8 337.45) scale(0.86 0.66)" font-size="6.9" fill="#b2b2b2" font-family="Liberation Sans, sans-serif">8</text><text transform="translate(31.8 341.85) scale(0.86 0.66)" font-size="6.9" fill="#b2b2b2" font-family="Liberation Sans, sans-serif">0</text><text transform="translate(31.8 346.25) scale(0.86 0.66)" font-size="6.9" fill="#b2b2b2" font-family="Liberation Sans, sans-serif">0</text><rect x="27" y="349.00" width="12" height="1" fill="#3e3e3e"/><rect x="37" y="354.44" width="2" height="1" fill="#484848"/><rect x="37" y="359.88" width="2" height="1" fill="#484848"/><rect x="37" y="365.31" width="2" height="1" fill="#484848"/><text transform="translate(31.8 354.80) scale(0.86 0.66)" font-size="6.9" fill="#b2b2b2" font-family="Liberation Sans, sans-serif">2</text><text transform="translate(31.8 359.20) scale(0.86 0.66)" font-size="6.9" fill="#b2b2b2" font-family="Liberation Sans, sans-serif">0</text><text transform="translate(31.8 363.60) scale(0.86 0.66)" font-size="6.9" fill="#b2b2b2" font-family="Liberation Sans, sans-serif">0</text><text transform="translate(31.8 368.00) scale(0.86 0.66)" font-size="6.9" fill="#b2b2b2" font-family="Liberation Sans, sans-serif">0</text><rect x="27" y="370.75" width="12" height="1" fill="#3e3e3e"/><rect x="37" y="376.19" width="2" height="1" fill="#484848"/><rect x="37" y="381.62" width="2" height="1" fill="#484848"/><rect x="37" y="387.06" width="2" height="1" fill="#484848"/><text transform="translate(31.8 376.55) scale(0.86 0.66)" font-size="6.9" fill="#b2b2b2" font-family="Liberation Sans, sans-serif">2</text><text transform="translate(31.8 380.95) scale(0.86 0.66)" font-size="6.9" fill="#b2b2b2" font-family="Liberation Sans, sans-serif">2</text><text transform="translate(31.8 385.35) scale(0.86 0.66)" font-size="6.9" fill="#b2b2b2" font-family="Liberation Sans, sans-serif">0</text><text transform="translate(31.8 389.75) scale(0.86 0.66)" font-size="6.9" fill="#b2b2b2" font-family="Liberation Sans, sans-serif">0</text><rect x="27" y="392.50" width="12" height="1" fill="#3e3e3e"/><rect x="37" y="397.94" width="2" height="1" fill="#484848"/><rect x="37" y="403.38" width="2" height="1" fill="#484848"/><rect x="37" y="408.81" width="2" height="1" fill="#484848"/><text transform="translate(31.8 398.30) scale(0.86 0.66)" font-size="6.9" fill="#b2b2b2" font-family="Liberation Sans, sans-serif">2</text><text transform="translate(31.8 402.70) scale(0.86 0.66)" font-size="6.9" fill="#b2b2b2" font-family="Liberation Sans, sans-serif">4</text><text transform="translate(31.8 407.10) scale(0.86 0.66)" font-size="6.9" fill="#b2b2b2" font-family="Liberation Sans, sans-serif">0</text><text transform="translate(31.8 411.50) scale(0.86 0.66)" font-size="6.9" fill="#b2b2b2" font-family="Liberation Sans, sans-serif">0</text><rect x="27" y="414.25" width="12" height="1" fill="#3e3e3e"/><rect x="37" y="419.69" width="2" height="1" fill="#484848"/><rect x="37" y="425.12" width="2" height="1" fill="#484848"/><rect x="37" y="430.56" width="2" height="1" fill="#484848"/><text transform="translate(31.8 420.05) scale(0.86 0.66)" font-size="6.9" fill="#b2b2b2" font-family="Liberation Sans, sans-serif">2</text><text transform="translate(31.8 424.45) scale(0.86 0.66)" font-size="6.9" fill="#b2b2b2" font-family="Liberation Sans, sans-serif">6</text><text transform="translate(31.8 428.85) scale(0.86 0.66)" font-size="6.9" fill="#b2b2b2" font-family="Liberation Sans, sans-serif">0</text><text transform="translate(31.8 433.25) scale(0.86 0.66)" font-size="6.9" fill="#b2b2b2" font-family="Liberation Sans, sans-serif">0</text><rect x="27" y="436.00" width="12" height="1" fill="#3e3e3e"/><rect x="37" y="441.44" width="2" height="1" fill="#484848"/><rect x="37" y="446.88" width="2" height="1" fill="#484848"/><rect x="37" y="452.31" width="2" height="1" fill="#484848"/><text transform="translate(31.8 441.80) scale(0.86 0.66)" font-size="6.9" fill="#b2b2b2" font-family="Liberation Sans, sans-serif">2</text><text transform="translate(31.8 446.20) scale(0.86 0.66)" font-size="6.9" fill="#b2b2b2" font-family="Liberation Sans, sans-serif">8</text><text transform="translate(31.8 450.60) scale(0.86 0.66)" font-size="6.9" fill="#b2b2b2" font-family="Liberation Sans, sans-serif">0</text><text transform="translate(31.8 455.00) scale(0.86 0.66)" font-size="6.9" fill="#b2b2b2" font-family="Liberation Sans, sans-serif">0</text><rect x="27" y="457.75" width="12" height="1" fill="#3e3e3e"/><rect x="37" y="463.19" width="2" height="1" fill="#484848"/><rect x="37" y="468.62" width="2" height="1" fill="#484848"/><rect x="37" y="474.06" width="2" height="1" fill="#484848"/><text transform="translate(31.8 463.55) scale(0.86 0.66)" font-size="6.9" fill="#b2b2b2" font-family="Liberation Sans, sans-serif">3</text><text transform="translate(31.8 467.95) scale(0.86 0.66)" font-size="6.9" fill="#b2b2b2" font-family="Liberation Sans, sans-serif">0</text><text transform="translate(31.8 472.35) scale(0.86 0.66)" font-size="6.9" fill="#b2b2b2" font-family="Liberation Sans, sans-serif">0</text><text transform="translate(31.8 476.75) scale(0.86 0.66)" font-size="6.9" fill="#b2b2b2" font-family="Liberation Sans, sans-serif">0</text><rect x="27" y="479.50" width="12" height="1" fill="#3e3e3e"/><rect x="37" y="484.94" width="2" height="1" fill="#484848"/><rect x="37" y="490.38" width="2" height="1" fill="#484848"/><rect x="37" y="495.81" width="2" height="1" fill="#484848"/><text transform="translate(31.8 485.30) scale(0.86 0.66)" font-size="6.9" fill="#b2b2b2" font-family="Liberation Sans, sans-serif">3</text><text transform="translate(31.8 489.70) scale(0.86 0.66)" font-size="6.9" fill="#b2b2b2" font-family="Liberation Sans, sans-serif">2</text><text transform="translate(31.8 494.10) scale(0.86 0.66)" font-size="6.9" fill="#b2b2b2" font-family="Liberation Sans, sans-serif">0</text><text transform="translate(31.8 498.50) scale(0.86 0.66)" font-size="6.9" fill="#b2b2b2" font-family="Liberation Sans, sans-serif">0</text><rect x="27" y="501.25" width="12" height="1" fill="#3e3e3e"/><rect x="37" y="506.69" width="2" height="1" fill="#484848"/><rect x="37" y="512.12" width="2" height="1" fill="#484848"/><rect x="37" y="517.56" width="2" height="1" fill="#484848"/><text transform="translate(31.8 507.05) scale(0.86 0.66)" font-size="6.9" fill="#b2b2b2" font-family="Liberation Sans, sans-serif">3</text><text transform="translate(31.8 511.45) scale(0.86 0.66)" font-size="6.9" fill="#b2b2b2" font-family="Liberation Sans, sans-serif">4</text><text transform="translate(31.8 515.85) scale(0.86 0.66)" font-size="6.9" fill="#b2b2b2" font-family="Liberation Sans, sans-serif">0</text><text transform="translate(31.8 520.25) scale(0.86 0.66)" font-size="6.9" fill="#b2b2b2" font-family="Liberation Sans, sans-serif">0</text><rect x="27" y="523.00" width="12" height="1" fill="#3e3e3e"/><rect x="37" y="528.44" width="2" height="1" fill="#484848"/><rect x="37" y="533.88" width="2" height="1" fill="#484848"/><rect x="37" y="539.31" width="2" height="1" fill="#484848"/><text transform="translate(31.8 528.80) scale(0.86 0.66)" font-size="6.9" fill="#b2b2b2" font-family="Liberation Sans, sans-serif">3</text><text transform="translate(31.8 533.20) scale(0.86 0.66)" font-size="6.9" fill="#b2b2b2" font-family="Liberation Sans, sans-serif">6</text><text transform="translate(31.8 537.60) scale(0.86 0.66)" font-size="6.9" fill="#b2b2b2" font-family="Liberation Sans, sans-serif">0</text><text transform="translate(31.8 542.00) scale(0.86 0.66)" font-size="6.9" fill="#b2b2b2" font-family="Liberation Sans, sans-serif">0</text><rect x="27" y="544.75" width="12" height="1" fill="#3e3e3e"/><rect x="37" y="550.19" width="2" height="1" fill="#484848"/><rect x="37" y="555.62" width="2" height="1" fill="#484848"/><rect x="37" y="561.06" width="2" height="1" fill="#484848"/><text transform="translate(31.8 550.55) scale(0.86 0.66)" font-size="6.9" fill="#b2b2b2" font-family="Liberation Sans, sans-serif">3</text><text transform="translate(31.8 554.95) scale(0.86 0.66)" font-size="6.9" fill="#b2b2b2" font-family="Liberation Sans, sans-serif">8</text><text transform="translate(31.8 559.35) scale(0.86 0.66)" font-size="6.9" fill="#b2b2b2" font-family="Liberation Sans, sans-serif">0</text><text transform="translate(31.8 563.75) scale(0.86 0.66)" font-size="6.9" fill="#b2b2b2" font-family="Liberation Sans, sans-serif">0</text><rect x="27" y="566.50" width="12" height="1" fill="#3e3e3e"/><rect x="37" y="571.94" width="2" height="1" fill="#484848"/><rect x="37" y="577.38" width="2" height="1" fill="#484848"/><rect x="37" y="582.81" width="2" height="1" fill="#484848"/><text transform="translate(31.8 572.30) scale(0.86 0.66)" font-size="6.9" fill="#b2b2b2" font-family="Liberation Sans, sans-serif">4</text><text transform="translate(31.8 576.70) scale(0.86 0.66)" font-size="6.9" fill="#b2b2b2" font-family="Liberation Sans, sans-serif">0</text><text transform="translate(31.8 581.10) scale(0.86 0.66)" font-size="6.9" fill="#b2b2b2" font-family="Liberation Sans, sans-serif">0</text><text transform="translate(31.8 585.50) scale(0.86 0.66)" font-size="6.9" fill="#b2b2b2" font-family="Liberation Sans, sans-serif">0</text><rect x="27" y="588.25" width="12" height="1" fill="#3e3e3e"/></svg>
<div class="a" style="left:0px;top:0px;width:1024px;height:20px;background:#535353;"></div><div class="a" style="left:0px;top:20px;width:1024px;height:1px;background:#424242;"></div><svg style="left:13px;top:5px" width="12" height="11" viewBox="0 0 12 11"><path d="M6 0.3 L0.2 5.2 H1.8 V10.5 H4.8 V7 H7.2 V10.5 H10.2 V5.2 H11.8 Z" fill="#e6e6e6"/></svg><div class="sep" style="left:34px"></div><div class="sep" style="left:65px"></div><svg style="left:39px;top:5px" width="11" height="11" viewBox="0 0 11 11"><path d="M5.5 0 L7.3 2.2 H6.1 V4.9 H8.8 V3.7 L11 5.5 L8.8 7.3 V6.1 H6.1 V8.8 H7.3 L5.5 11 L3.7 8.8 H4.9 V6.1 H2.2 V7.3 L0 5.5 L2.2 3.7 V4.9 H4.9 V2.2 H3.7 Z" fill="#d8d8d8"/></svg><svg style="left:56px;top:9px" width="5" height="4" viewBox="0 0 5 4"><path d="M0.4 0.6 L2.5 2.8 L4.6 0.6" stroke="#ccc" stroke-width="0.9" fill="none"/></svg><svg style="left:70px;top:6.5px" width="7" height="7" viewBox="0 0 7 7"><rect width="7" height="7" rx="1.2" fill="#e2e2e2"/><path d="M1.6 3.6 L3 5 L5.5 1.9" stroke="#444" stroke-width="1.2" fill="none"/></svg><div class="t" style="left:82px;top:6.6px;font-size:7.4px;color:#e2e2e2;-webkit-text-stroke:0.15px #e2e2e2;letter-spacing:-0.373px;">Selec. autom.:</div><div class="a" style="left:130px;top:4px;width:33px;height:12px;background:#464646;border-radius:2px"></div><div class="t" style="left:134.3px;top:6.6px;font-size:7.4px;color:#e2e2e2;-webkit-text-stroke:0.15px #e2e2e2;letter-spacing:-0.557px;">Capa</div><svg style="left:156px;top:9px" width="5" height="4" viewBox="0 0 5 4"><path d="M0.4 0.6 L2.5 2.8 L4.6 0.6" stroke="#ccc" stroke-width="0.9" fill="none"/></svg><svg style="left:170px;top:6.5px" width="7" height="7" viewBox="0 0 7 7"><rect width="7" height="7" rx="1.2" fill="#e2e2e2"/><path d="M1.6 3.6 L3 5 L5.5 1.9" stroke="#444" stroke-width="1.2" fill="none"/></svg><div class="t" style="left:181.3px;top:6.6px;font-size:7.4px;color:#e2e2e2;-webkit-text-stroke:0.15px #e2e2e2;letter-spacing:-0.132px;">Mostrar contr. transf.</div><div class="sep" style="left:250px"></div><div class="sep" style="left:324px"></div><div class="sep" style="left:398px"></div><div class="sep" style="left:420px"></div><svg style="left:257px;top:5px" width="9" height="10"><rect x="0" y="0" width="1" height="10" fill="#9a9a9a"/><rect x="2" y="2" width="4" height="2.5" fill="#9a9a9a"/><rect x="2" y="6" width="6.5" height="2.5" fill="#9a9a9a"/></svg><svg style="left:273px;top:5px" width="9" height="10"><rect x="4" y="0" width="1" height="10" fill="#9a9a9a"/><rect x="2" y="2" width="5" height="2.5" fill="#9a9a9a"/><rect x="0.5" y="6" width="8" height="2.5" fill="#9a9a9a"/></svg><svg style="left:290px;top:5px" width="9" height="10"><rect x="8" y="0" width="1" height="10" fill="#9a9a9a"/><rect x="3" y="2" width="4" height="2.5" fill="#9a9a9a"/><rect x="0.5" y="6" width="6.5" height="2.5" fill="#9a9a9a"/></svg><svg style="left:308px;top:5px" width="10" height="10"><rect x="0" y="1" width="10" height="1" fill="#9a9a9a"/><rect x="2" y="3.7" width="6" height="2.6" fill="#9a9a9a"/><rect x="0" y="8" width="10" height="1" fill="#9a9a9a"/></svg><svg style="left:331px;top:5px" width="10" height="10"><rect x="0" y="0" width="10" height="1" fill="#9a9a9a"/><rect x="2" y="2" width="2.5" height="6.5" fill="#9a9a9a"/><rect x="6" y="2" width="2.5" height="4" fill="#9a9a9a"/></svg><svg style="left:346px;top:5px" width="10" height="10"><rect x="0" y="4.5" width="10" height="1" fill="#9a9a9a"/><rect x="2" y="1" width="2.5" height="8" fill="#9a9a9a"/><rect x="6" y="2.5" width="2.5" height="5" fill="#9a9a9a"/></svg><svg style="left:364px;top:5px" width="10" height="10"><rect x="0" y="9" width="10" height="1" fill="#9a9a9a"/><rect x="2" y="1.5" width="2.5" height="6.5" fill="#9a9a9a"/><rect x="6" y="4" width="2.5" height="4" fill="#9a9a9a"/></svg><svg style="left:383px;top:5px" width="9" height="10"><rect x="1" y="0" width="1" height="10" fill="#9a9a9a"/><rect x="3.5" y="2" width="2.6" height="6" fill="#9a9a9a"/><rect x="7.5" y="0" width="1" height="10" fill="#9a9a9a"/></svg><svg style="left:404px;top:8.5px" width="11" height="3"><circle cx="1.4" cy="1.5" r="1.1" fill="#ddd"/><circle cx="5.3" cy="1.5" r="1.1" fill="#ddd"/><circle cx="9.2" cy="1.5" r="1.1" fill="#ddd"/></svg><svg style="left:430px;top:5.5px" width="10" height="10" viewBox="-5 -5 10 10"><g fill="#ddd"><rect x="-0.9" y="-4.6" width="1.8" height="2.2" transform="rotate(0)"/><rect x="-0.9" y="-4.6" width="1.8" height="2.2" transform="rotate(45)"/><rect x="-0.9" y="-4.6" width="1.8" height="2.2" transform="rotate(90)"/><rect x="-0.9" y="-4.6" width="1.8" height="2.2" transform="rotate(135)"/><rect x="-0.9" y="-4.6" width="1.8" height="2.2" transform="rotate(180)"/><rect x="-0.9" y="-4.6" width="1.8" height="2.2" transform="rotate(225)"/><rect x="-0.9" y="-4.6" width="1.8" height="2.2" transform="rotate(270)"/><rect x="-0.9" y="-4.6" width="1.8" height="2.2" transform="rotate(315)"/></g><circle r="2.6" fill="none" stroke="#ddd" stroke-width="1.7"/><path d="M3.6 4 L5 4 L4.3 4.9 Z" fill="#ccc"/></svg><div class="a" style="left:883.5px;top:2px;width:47.5px;height:15px;background:#2d6fe0;border-radius:7.5px"></div><div class="t" style="left:891.4px;top:6.4px;font-size:7.3px;color:#fff;font-weight:bold;letter-spacing:-0.484px;">Compartir</div><svg style="left:940px;top:4px" width="11" height="12" viewBox="0 0 11 12"><path d="M5.5 0.3 C6.1 0.3 6.3 0.8 6.3 1.2 C8 1.8 8.6 3.3 8.6 5.2 C8.6 7.2 9.2 8 10.2 8.8 V9.4 H0.8 V8.8 C1.8 8 2.4 7.2 2.4 5.2 C2.4 3.3 3 1.8 4.7 1.2 C4.7 0.8 4.9 0.3 5.5 0.3 Z" fill="#cfcfcf"/><path d="M4.2 10.2 H6.8 C6.8 11 6.2 11.5 5.5 11.5 C4.8 11.5 4.2 11 4.2 10.2Z" fill="#cfcfcf"/></svg><svg style="left:961px;top:5px" width="11" height="11" viewBox="0 0 11 11"><circle cx="4.3" cy="4.3" r="3.4" fill="none" stroke="#d8d8d8" stroke-width="1.1"/><path d="M6.8 6.8 L10 10" stroke="#d8d8d8" stroke-width="1.3"/></svg><svg style="left:981px;top:3px" width="12" height="13" viewBox="0 0 12 13"><path d="M6 2.6 C8 2.6 9.2 4 9.2 5.5 C9.2 6.8 8.4 7.4 7.8 8.3 V9.6 H4.2 V8.3 C3.6 7.4 2.8 6.8 2.8 5.5 C2.8 4 4 2.6 6 2.6 Z" fill="none" stroke="#d8d8d8" stroke-width="0.9"/><path d="M4.5 10.6 H7.5 M5 11.8 H7" stroke="#d8d8d8" stroke-width="0.8"/><path d="M6 0 V1.4 M1.6 1.6 L2.6 2.6 M10.4 1.6 L9.4 2.6 M0 5.5 H1.4 M12 5.5 H10.6" stroke="#d8d8d8" stroke-width="0.8"/></svg><svg style="left:1000px;top:6px" width="11" height="9" viewBox="0 0 11 9"><rect x="0.5" y="0.5" width="10" height="8" fill="none" stroke="#cfcfcf" stroke-width="1"/><rect x="1" y="1" width="2.8" height="7" fill="#cfcfcf"/></svg><svg style="left:1016.5px;top:9px" width="5" height="4" viewBox="0 0 5 4"><path d="M0.4 0.6 L2.5 2.8 L4.6 0.6" stroke="#ccc" stroke-width="0.9" fill="none"/></svg>
<div class="a" style="left:25px;top:21px;width:889px;height:18px;background:#424242;"></div><div class="a" style="left:27px;top:21px;width:252px;height:18px;background:#535353;"></div><svg style="left:32px;top:27.5px" width="5" height="5"><path d="M0.3 0.3 L4.7 4.7 M4.7 0.3 L0.3 4.7" stroke="#bbb" stroke-width="0.8"/></svg><div class="t" style="left:42.8px;top:26.2px;font-size:7.5px;color:#f2f2f2;font-weight:bold;letter-spacing:-0.105px;">E-LEARNING BY HOUDA BAKKALI.psd al 34,4% (FORM, RGB/8*) *</div><div class="a" style="left:27px;top:38.5px;width:887px;height:0.5px;background:#3c3c3c;"></div>
<div class="a" style="left:0px;top:20px;width:27px;height:580px;background:#4a4a4a;"></div><div class="a" style="left:1px;top:21px;width:24.4px;height:579px;background:#535353;"></div><div class="a" style="left:0px;top:0px;width:1px;height:600px;background:#3c1f1f;"></div><div class="a" style="left:1px;top:20.6px;width:24.4px;height:8.3px;background:#404040;"></div><svg style="left:4px;top:22.6px" width="6" height="4"><path d="M0.3 0.3 L2.2 2 L0.3 3.7 M3.2 0.3 L5.1 2 L3.2 3.7" stroke="#ddd" stroke-width="0.8" fill="none"/></svg><div class="a" style="left:7px;top:31px;width:12px;height:1.5px;background:#494949;"></div><div class="a" style="left:3.3px;top:39.3px;width:19.4px;height:14.8px;background:#383838;border-radius:2px"></div><svg style="left:7.20px;top:41.70px" width="11" height="11" viewBox="0 0 11 11"><path d="M5.5 0 L7.3 2.2 H6.1 V4.9 H8.8 V3.7 L11 5.5 L8.8 7.3 V6.1 H6.1 V8.8 H7.3 L5.5 11 L3.7 8.8 H4.9 V6.1 H2.2 V7.3 L0 5.5 L2.2 3.7 V4.9 H4.9 V2.2 H3.7 Z" fill="#f0f0f0"/></svg><svg style="left:7.20px;top:59.35px" width="11" height="8.5" viewBox="0 0 11 8.5"><rect x="0.6" y="0.6" width="9.8" height="7.3" fill="none" stroke="#e2e2e2" stroke-width="1.2" stroke-dasharray="2.4 1.3"/></svg><svg style="left:6.70px;top:73.60px" width="12" height="12" viewBox="0 0 12 12"><circle cx="4.6" cy="6.8" r="3.7" fill="none" stroke="#e2e2e2" stroke-width="1" stroke-dasharray="1.4 1"/><path d="M10.8 0.6 L11.6 1.4 L6.6 7.4 L5.4 6.4 Z" fill="#e2e2e2"/><path d="M5.2 6.8 L6.3 7.8 C5.8 9 4.6 9.4 3.4 9.2 C4.4 8.6 4.4 7.4 5.2 6.8Z" fill="#e2e2e2"/></svg><svg style="left:19.7px;top:85.2px" width="2.2" height="2.2"><path d="M2.2 0 V2.2 H0 Z" fill="#b0b0b0"/></svg><svg style="left:7.20px;top:90.50px" width="11" height="11" viewBox="0 0 11 11"><path d="M2.8 0 V8.2 H11 M0 2.8 H8.2 V11" fill="none" stroke="#e2e2e2" stroke-width="1.25"/></svg><svg style="left:19.7px;top:101.6px" width="2.2" height="2.2"><path d="M2.2 0 V2.2 H0 Z" fill="#b0b0b0"/></svg><svg style="left:6.70px;top:106.60px" width="12" height="12" viewBox="0 0 12 12"><rect x="0.6" y="0.6" width="8.6" height="8.6" fill="none" stroke="#e2e2e2" stroke-width="1" stroke-dasharray="1.6 1"/><rect x="2.4" y="2.4" width="5" height="5" fill="#e2e2e2"/><path d="M6.4 6 L11.4 8.6 L9.2 9.2 L8.6 11.4 Z" fill="#e2e2e2" stroke="#535353" stroke-width="0.5"/></svg><svg style="left:19.7px;top:118.2px" width="2.2" height="2.2"><path d="M2.2 0 V2.2 H0 Z" fill="#b0b0b0"/></svg><svg style="left:7.20px;top:123.70px" width="11" height="11" viewBox="0 0 11 11"><path d="M8.6 0.4 C9.6 -0.2 11 1.2 10.6 2.4 L8.8 4.2 L9.4 4.8 L8.6 5.6 L5.4 2.4 L6.2 1.6 L6.8 2.2 Z" fill="#e2e2e2"/><path d="M6 3.6 L7.4 5 L3 9.4 L1.4 10 L0.6 10.6 L0.2 10.2 L1 9.4 L1.6 8 Z" fill="none" stroke="#e2e2e2" stroke-width="0.9"/></svg><svg style="left:19.7px;top:134.8px" width="2.2" height="2.2"><path d="M2.2 0 V2.2 H0 Z" fill="#b0b0b0"/></svg><svg style="left:6.70px;top:139.80px" width="12" height="12" viewBox="0 0 12 12"><g transform="rotate(-45 6 6)"><rect x="0.2" y="3.6" width="11.6" height="4.8" rx="2.4" fill="#e2e2e2"/><rect x="4.3" y="4.2" width="3.4" height="3.6" fill="#535353"/><circle cx="5.2" cy="5.2" r="0.4" fill="#e2e2e2"/><circle cx="6.8" cy="5.2" r="0.4" fill="#e2e2e2"/><circle cx="5.2" cy="6.8" r="0.4" fill="#e2e2e2"/><circle cx="6.8" cy="6.8" r="0.4" fill="#e2e2e2"/></g><path d="M1 0.6 L1.5 2 L2.8 2.4 L1.5 2.8 L1 4.2 L0.5 2.8 L-0.8 2.4 L0.5 2 Z" fill="#e2e2e2"/></svg><svg style="left:19.7px;top:151.4px" width="2.2" height="2.2"><path d="M2.2 0 V2.2 H0 Z" fill="#b0b0b0"/></svg><svg style="left:7.20px;top:156.80px" width="11" height="11" viewBox="0 0 11 11"><path d="M10 0.3 L10.8 1.1 L5.6 7 L4.2 5.6 Z" fill="#e2e2e2"/><path d="M3.6 6.2 L5 7.6 C4.6 9.6 2.6 10.6 0.4 10.4 C1.6 9.4 1.8 7 3.6 6.2 Z" fill="#e2e2e2"/></svg><svg style="left:19.7px;top:167.9px" width="2.2" height="2.2"><path d="M2.2 0 V2.2 H0 Z" fill="#b0b0b0"/></svg><svg style="left:7.70px;top:173.80px" width="10" height="10" viewBox="0 0 11 11"><path d="M4 0.4 H7 C8 0.4 8 1.4 7.6 2.2 L6.8 4.6 V6 H10 V8.4 H1 V6 H4.2 V4.6 L3.4 2.2 C3 1.4 3 0.4 4 0.4 Z" fill="#e2e2e2"/><rect x="1" y="9.4" width="9" height="1.3" fill="#e2e2e2"/></svg><svg style="left:19.7px;top:184.4px" width="2.2" height="2.2"><path d="M2.2 0 V2.2 H0 Z" fill="#b0b0b0"/></svg><div class="a" style="left:7.2px;top:190.6px;width:11px;height:8.8px;border:0.8px solid #d8d8d8;background:linear-gradient(to right,#e0e0e0,#555)"></div><svg style="left:19.7px;top:200.8px" width="2.2" height="2.2"><path d="M2.2 0 V2.2 H0 Z" fill="#b0b0b0"/></svg><svg style="left:6.70px;top:206.80px" width="12" height="10" viewBox="0 0 12 10"><path d="M1 5.6 C1 2.4 3.6 0.6 6.4 0.6 C9.4 0.6 11.6 2.6 11.6 5 C11.6 7.6 9.8 8.6 8 8.6 H3.6 C2 8.6 1 7.4 1 5.6 Z" fill="#e2e2e2"/><circle cx="4.2" cy="5.4" r="1.3" fill="#535353"/><path d="M7 5.4 H10" stroke="#535353" stroke-width="1"/></svg><svg style="left:19.7px;top:217.4px" width="2.2" height="2.2"><path d="M2.2 0 V2.2 H0 Z" fill="#b0b0b0"/></svg><svg style="left:7.20px;top:222.40px" width="11" height="12" viewBox="0 0 11 12"><path d="M6.6 0.6 L10.6 4.6 L9.4 5.8 C8.8 8.6 6.6 10.4 1.6 11.2 L0.8 10.4 C1.6 5.4 3.4 3.2 6.2 2.6 L5.4 1.8 Z" fill="none" stroke="#e2e2e2" stroke-width="1.1"/><path d="M1.2 10.8 L5 7" stroke="#e2e2e2" stroke-width="0.8"/><circle cx="5.6" cy="6.4" r="1" fill="#e2e2e2"/></svg><svg style="left:19.7px;top:234.0px" width="2.2" height="2.2"><path d="M2.2 0 V2.2 H0 Z" fill="#b0b0b0"/></svg><div class="t" style="left:7.6px;top:238.2px;font-size:13px;font-family:'Liberation Serif',serif;font-weight:bold;color:#e2e2e2">T</div><svg style="left:19.7px;top:250.2px" width="2.2" height="2.2"><path d="M2.2 0 V2.2 H0 Z" fill="#b0b0b0"/></svg><svg style="left:6.70px;top:256.80px" width="12" height="9" viewBox="0 0 12 9"><rect x="0.6" y="0.6" width="10.8" height="7.8" fill="#6a6a6a" stroke="#e2e2e2" stroke-width="1.1"/></svg><svg style="left:19.7px;top:266.9px" width="2.2" height="2.2"><path d="M2.2 0 V2.2 H0 Z" fill="#b0b0b0"/></svg><svg style="left:7.20px;top:272.00px" width="11" height="12" viewBox="0 0 11 12"><path d="M3.2 5.8 V1.8 C3.2 0.8 4.6 0.8 4.6 1.8 V1 C4.6 0 6 0 6 1 V1.6 C6 0.6 7.4 0.6 7.4 1.6 V2.8 C7.4 1.8 8.8 1.8 8.8 2.8 V7.6 C8.8 10 7.6 11.6 5.6 11.6 C3.8 11.6 3 10.6 2 9 L0.4 6.4 C0 5.6 1 4.8 1.8 5.6 L3.2 7 Z" fill="#e2e2e2"/></svg><svg style="left:7.20px;top:289.10px" width="11" height="11" viewBox="0 0 11 11"><circle cx="4.3" cy="4.3" r="3.5" fill="none" stroke="#e2e2e2" stroke-width="1.2"/><path d="M6.9 6.9 L10.4 10.4" stroke="#e2e2e2" stroke-width="1.5"/></svg><svg style="left:7.70px;top:309.10px" width="10" height="3" viewBox="0 0 10 3"><circle cx="1.3" cy="1.5" r="1.1" fill="#e2e2e2"/><circle cx="5" cy="1.5" r="1.1" fill="#e2e2e2"/><circle cx="8.7" cy="1.5" r="1.1" fill="#e2e2e2"/></svg><svg style="left:19.7px;top:316.2px" width="2.2" height="2.2"><path d="M2.2 0 V2.2 H0 Z" fill="#b0b0b0"/></svg><svg style="left:3.30px;top:322.50px" width="7" height="7" viewBox="0 0 7 7"><rect x="2.4" y="2.4" width="4.2" height="4.2" fill="#fff" stroke="#ddd" stroke-width="0.6"/><rect x="0.4" y="0.4" width="4.2" height="4.2" fill="#000" stroke="#ddd" stroke-width="0.6"/></svg><svg style="left:15.10px;top:322.50px" width="7" height="7" viewBox="0 0 7 7"><path d="M1.6 2 H4.4 C5.2 2 5.4 2.4 5.4 3 V5.4" fill="none" stroke="#e2e2e2" stroke-width="0.9"/><path d="M1.8 0.6 L0.2 2 L1.8 3.4 Z M4 5 L5.4 6.8 L6.8 5 Z" fill="#e2e2e2"/></svg><div class="a" style="left:10px;top:339.2px;width:12px;height:11.6px;background:#000;border:1px solid #e6e6e6"></div><div class="a" style="left:3.7px;top:333.2px;width:11.6px;height:11px;background:#f6f6f6;border:0.6px solid #777"></div><svg style="left:6.70px;top:357.60px" width="12" height="10" viewBox="0 0 12 10"><rect x="3.2" y="0.6" width="8.2" height="6" fill="#535353" stroke="#e2e2e2" stroke-width="1"/><rect x="0.6" y="3.2" width="8.2" height="6" fill="#535353" stroke="#e2e2e2" stroke-width="1"/></svg><svg style="left:19.7px;top:368.2px" width="2.2" height="2.2"><path d="M2.2 0 V2.2 H0 Z" fill="#b0b0b0"/></svg><svg style="left:6.70px;top:376.30px" width="12" height="11" viewBox="0 0 12 11"><path d="M1.4 9.8 V5 C1.4 2.4 6.6 2.4 6.6 5 V6" fill="none" stroke="#e2e2e2" stroke-width="1"/><rect x="0.6" y="6.4" width="5" height="4" fill="none" stroke="#e2e2e2" stroke-width="0.9"/><path d="M6.4 6.2 L10.6 8.4 L8.8 8.9 L8.3 10.7 Z" fill="#e2e2e2"/><circle cx="9.4" cy="2.6" r="2" fill="#3b8cff"/></svg>
<div class="a" style="left:914px;top:39px;width:11px;height:561px;background:#4a4a4a;"></div><div class="a" style="left:925px;top:21px;width:27px;height:579px;background:#404040;"></div><div class="a" style="left:926px;top:28px;width:24px;height:572px;background:#4f4f4f;"></div><div class="a" style="left:748px;top:20.5px;width:276px;height:7.5px;background:#404040;"></div><div class="a" style="left:952px;top:28px;width:72px;height:572px;background:#535353;"></div><div class="a" style="left:951px;top:21px;width:1.2px;height:579px;background:#3e3e3e;"></div><svg style="left:941.8px;top:22.9px" width="5" height="3.4"><path d="M1.8 0.2 L0.3 1.7 L1.8 3.2 M4.2 0.2 L2.7 1.7 L4.2 3.2" stroke="#ccc" stroke-width="0.7" fill="none"/></svg><svg style="left:1016px;top:22.9px" width="5" height="3.4"><path d="M1.8 0.2 L0.3 1.7 L1.8 3.2 M4.2 0.2 L2.7 1.7 L4.2 3.2" stroke="#ccc" stroke-width="0.7" fill="none"/></svg><div class="a" style="left:954.5px;top:36px;width:66.5px;height:14.2px;background:#3c3c3c;border-radius:1px"></div><div class="a" style="left:980px;top:30.5px;width:12px;height:1.2px;background:#4a4a4a;"></div><div class="a" style="left:980px;top:126.5px;width:12px;height:1.2px;background:#4a4a4a;"></div><div class="a" style="left:980px;top:188.5px;width:12px;height:1.2px;background:#4a4a4a;"></div><div class="a" style="left:952px;top:124.5px;width:72px;height:1px;background:#454545;"></div><div class="a" style="left:952px;top:186.5px;width:72px;height:1px;background:#454545;"></div><div class="a" style="left:952px;top:212px;width:72px;height:1px;background:#454545;"></div><div class="t" style="left:974.8px;top:40.1px;font-size:7.4px;color:#f0f0f0;font-weight:bold;letter-spacing:-0.374px;">Color</div><svg style="left:957.40px;top:38.70px" width="12" height="10" viewBox="0 0 12 10"><path d="M6 0.4 C9.4 0.4 11.7 2.3 11.7 4.7 C11.7 6.9 9.7 7.2 8.6 6.9 C7.7 6.7 7.2 7.2 7.4 8 C7.6 8.9 6.9 9.6 5.8 9.6 C2.6 9.6 0.3 7.7 0.3 5 C0.3 2.3 2.6 0.4 6 0.4 Z" fill="#e6e6e6"/><circle cx="2.9" cy="4.2" r="0.95" fill="#3c3c3c"/><circle cx="5.2" cy="2.5" r="0.95" fill="#3c3c3c"/><circle cx="8.2" cy="2.9" r="0.95" fill="#3c3c3c"/><circle cx="3.6" cy="6.9" r="0.95" fill="#3c3c3c"/></svg><div class="t" style="left:974.8px;top:58.1px;font-size:7.4px;color:#f0f0f0;font-weight:bold;letter-spacing:-0.322px;">Muestras</div><svg style="left:957.90px;top:56.95px" width="11" height="9.5" viewBox="0 0 11 9.5"><rect x="0.5" y="0.5" width="10" height="8.5" fill="none" stroke="#e6e6e6" stroke-width="1"/><path d="M3.8 0.5 V9 M7.2 0.5 V9 M0.5 3.3 H10.5 M0.5 6.1 H10.5" stroke="#e6e6e6" stroke-width="0.9"/><rect x="0.5" y="0.5" width="10" height="2.8" fill="#e6e6e6" opacity="0.55"/></svg><div class="t" style="left:974.8px;top:75.80000000000001px;font-size:7.4px;color:#f0f0f0;font-weight:bold;letter-spacing:-0.369px;">Degradados</div><div class="a" style="left:957.9px;top:74.80000000000001px;width:11px;height:9.2px;border:0.9px solid #e6e6e6;background:linear-gradient(to right,#777,#e6e6e6)"></div><div class="t" style="left:974.8px;top:93.7px;font-size:7.4px;color:#f0f0f0;font-weight:bold;letter-spacing:-0.320px;">Motivos</div><svg style="left:957.90px;top:92.55px" width="11" height="9.5" viewBox="0 0 11 9.5"><rect x="0.5" y="0.5" width="10" height="8.5" fill="none" stroke="#e6e6e6" stroke-width="1"/><path d="M3.8 0.5 V9 M7.2 0.5 V9 M0.5 4.7 H10.5" stroke="#e6e6e6" stroke-width="0.9"/><rect x="1" y="4.7" width="2.8" height="4" fill="#e6e6e6"/><rect x="4.2" y="1" width="3" height="3.6" fill="#e6e6e6" opacity="0.8"/><rect x="7.4" y="4.7" width="3" height="4" fill="#e6e6e6"/></svg><div class="t" style="left:974.8px;top:111.30000000000001px;font-size:7.4px;color:#f0f0f0;font-weight:bold;letter-spacing:-0.264px;">Trazados</div><svg style="left:956.40px;top:109.40px" width="14" height="11" viewBox="0 0 14 11"><path d="M2.6 9 C2.6 4 4.4 1.6 7 1.6 C9.6 1.6 11.4 4 11.4 9" fill="none" stroke="#e6e6e6" stroke-width="0.8"/><path d="M1 1.6 H13" stroke="#e6e6e6" stroke-width="0.7"/><rect x="0" y="0.6" width="2" height="2" fill="#e6e6e6"/><rect x="12" y="0.6" width="2" height="2" fill="#e6e6e6"/><rect x="6" y="0.6" width="2" height="2" fill="#e6e6e6"/><circle cx="2.6" cy="9.4" r="1.1" fill="#535353" stroke="#e6e6e6" stroke-width="0.7"/><circle cx="11.4" cy="9.4" r="1.1" fill="#535353" stroke="#e6e6e6" stroke-width="0.7"/></svg><div class="t" style="left:974.8px;top:137.20000000000002px;font-size:7.4px;color:#f0f0f0;font-weight:bold;letter-spacing:-0.416px;">Propiedades</div><svg style="left:957.90px;top:135.80px" width="11" height="10" viewBox="0 0 11 10"><path d="M0 1.6 H11 M0 5 H11 M0 8.4 H11" stroke="#e6e6e6" stroke-width="0.8"/><circle cx="3.4" cy="1.6" r="1.3" fill="#535353" stroke="#e6e6e6" stroke-width="0.8"/><circle cx="7.6" cy="5" r="1.3" fill="#535353" stroke="#e6e6e6" stroke-width="0.8"/><circle cx="4.6" cy="8.4" r="1.3" fill="#535353" stroke="#e6e6e6" stroke-width="0.8"/></svg><div class="t" style="left:974.8px;top:155.20000000000002px;font-size:7.4px;color:#f0f0f0;font-weight:bold;letter-spacing:-0.451px;">Ajustes</div><svg style="left:958.40px;top:153.80px" width="10" height="10" viewBox="0 0 10 10"><circle cx="5" cy="5" r="4.4" fill="none" stroke="#e6e6e6" stroke-width="1"/><path d="M8.1 1.9 A4.4 4.4 0 0 0 1.9 8.1 Z" fill="#e6e6e6" transform="rotate(-90 5 5)"/></svg><div class="t" style="left:974.8px;top:173.1px;font-size:7.4px;color:#f0f0f0;font-weight:bold;letter-spacing:-0.424px;">Bibliotecas</div><svg style="left:957.90px;top:171.70px" width="11" height="10" viewBox="0 0 11 10"><rect x="0.6" y="0.6" width="9.8" height="8.8" fill="none" stroke="#e6e6e6" stroke-width="1.2"/><rect x="4.2" y="0.6" width="4.6" height="5.2" fill="#e6e6e6"/><rect x="5.4" y="1.6" width="2.2" height="3" fill="#535353"/></svg><div class="t" style="left:974.8px;top:199.0px;font-size:7.4px;color:#f0f0f0;font-weight:bold;letter-spacing:-0.527px;">Canales</div><svg style="left:957.40px;top:197.10px" width="12" height="11" viewBox="0 0 12 11"><circle cx="6" cy="3.8" r="3.2" fill="#e6e6e6" opacity="0.85"/><circle cx="3.8" cy="7.2" r="3.2" fill="#e6e6e6" opacity="0.6"/><circle cx="8.2" cy="7.2" r="3.2" fill="#e6e6e6" opacity="0.6"/></svg>
<div class="a" style="left:747px;top:27px;width:205px;height:136px;background:#3a3a3a;"></div><div class="a" style="left:748px;top:28px;width:203.5px;height:134px;background:#535353;"></div><div class="a" style="left:748px;top:28px;width:203.5px;height:18.6px;background:#484848;"></div><div class="a" style="left:748px;top:28px;width:29.2px;height:18.8px;background:#535353;"></div><div class="a" style="left:777.2px;top:28px;width:0.7px;height:18.6px;background:#414141;"></div><div class="a" style="left:810.6px;top:28px;width:0.7px;height:18.6px;background:#414141;"></div><div class="a" style="left:843.9px;top:28px;width:0.7px;height:18.6px;background:#414141;"></div><div class="a" style="left:876.3px;top:28px;width:0.7px;height:18.6px;background:#414141;"></div><div class="a" style="left:911.5px;top:28px;width:0.7px;height:18.6px;background:#414141;"></div><div class="t" style="left:753.5px;top:34px;font-size:7.4px;color:#f2f2f2;font-weight:bold;letter-spacing:-0.374px;">Color</div><div class="t" style="left:783.4px;top:34px;font-size:7.4px;color:#bdbdbd;font-weight:bold;letter-spacing:-0.322px;width:26.8px;overflow:hidden">Muestras</div><div class="t" style="left:816.2px;top:34px;font-size:7.4px;color:#bdbdbd;font-weight:bold;letter-spacing:-0.369px;width:27.4px;overflow:hidden">Degradados</div><div class="t" style="left:849.2px;top:34px;font-size:7.4px;color:#bdbdbd;font-weight:bold;letter-spacing:-0.387px;width:26.5px;overflow:hidden">Motivos</div><div class="t" style="left:882.4px;top:34px;font-size:7.4px;color:#bdbdbd;font-weight:bold;letter-spacing:-0.321px;width:28.6px;overflow:hidden">Trazados</div><svg style="left:925.5px;top:35.2px" width="7" height="5"><path d="M0.4 0.4 L2.6 2.5 L0.4 4.6 M3.6 0.4 L5.8 2.5 L3.6 4.6" stroke="#ddd" stroke-width="0.9" fill="none"/></svg><div class="a" style="left:935.8px;top:33px;width:0.8px;height:9px;background:#888;"></div><svg style="left:940.8px;top:35px" width="7" height="5.4"><rect width="7" height="1.4" y="0" fill="#9a9a9a"/><rect width="7" height="1.4" y="2" fill="#9a9a9a"/><rect width="7" height="1.4" y="4" fill="#9a9a9a"/></svg><div class="a" style="left:760.5px;top:59.5px;width:12.5px;height:12.5px;background:#000;border:1px solid #cfcfcf"></div><div class="a" style="left:753.5px;top:52.5px;width:13.5px;height:13.5px;background:#f4f4f4;border:1px solid #666"></div><div class="a" style="left:777px;top:51px;width:140.5px;height:95px;background:linear-gradient(to bottom,rgba(0,0,0,0),#000),linear-gradient(to right,#fff,#1ee3ff)"></div><svg style="left:774px;top:51px" width="8" height="8"><circle cx="3" cy="3.6" r="2.6" fill="none" stroke="#fff" stroke-width="0.9"/></svg><div class="a" style="left:928px;top:51px;width:12.5px;height:95px;background:linear-gradient(to bottom,#ff0030 0%,#ff00ff 16%,#0000ff 33%,#00ffff 50%,#00ff00 66%,#ffff00 83%,#ff0000 100%)"></div><svg style="left:922.5px;top:94px" width="5" height="5"><path d="M0.3 0.3 L4 2.5 L0.3 4.7 Z" fill="#eee"/></svg><div class="a" style="left:748px;top:158.4px;width:203.5px;height:0.8px;background:#454545;"></div><div class="a" style="left:843px;top:160px;width:12px;height:1.2px;background:#4a4a4a;"></div>
<div class="a" style="left:747.5px;top:163.5px;width:205px;height:269.5px;background:#363636;"></div><div class="a" style="left:749px;top:164px;width:202.5px;height:268px;background:#535353;"></div><div class="a" style="left:749px;top:164px;width:202.5px;height:9.4px;background:#424242;"></div><svg style="left:751.5px;top:166.8px" width="4" height="4"><path d="M0.3 0.3 L3.7 3.7 M3.7 0.3 L0.3 3.7" stroke="#ccc" stroke-width="0.8"/></svg><svg style="left:942px;top:167.2px" width="5" height="3.4"><path d="M1.8 0.2 L0.3 1.7 L1.8 3.2 M4.2 0.2 L2.7 1.7 L4.2 3.2" stroke="#ccc" stroke-width="0.7" fill="none"/></svg><div class="a" style="left:749px;top:173.4px;width:202.5px;height:17.4px;background:#484848;"></div><div class="a" style="left:749px;top:173.4px;width:31.2px;height:17.6px;background:#535353;"></div><div class="t" style="left:754.8px;top:177.8px;font-size:7.8px;color:#f2f2f2;font-weight:bold;letter-spacing:-0.05px">Capas</div><svg style="left:941.4px;top:179px" width="7" height="5.4"><rect width="7" height="1.4" y="0" fill="#9a9a9a"/><rect width="7" height="1.4" y="2" fill="#9a9a9a"/><rect width="7" height="1.4" y="4" fill="#9a9a9a"/></svg><div class="a" style="left:752px;top:196.6px;width:69.4px;height:11.6px;background:#434343;border-radius:2px;border:0.6px solid #3a3a3a"></div><svg style="left:757px;top:198.8px" width="7" height="7"><circle cx="2.6" cy="2.6" r="2" fill="none" stroke="#ddd" stroke-width="0.8"/><path d="M4 4 L6.2 6.2" stroke="#ddd" stroke-width="0.9"/></svg><div class="t" style="left:765.4px;top:198.8px;font-size:7.4px;color:#e2e2e2;">Tipo</div><svg style="left:814px;top:200.8px" width="5" height="4" viewBox="0 0 5 4"><path d="M0.4 0.6 L2.5 2.8 L4.6 0.6" stroke="#ccc" stroke-width="0.9" fill="none"/></svg><svg style="left:837px;top:198.6px" width="9" height="8"><rect x="0.5" y="0.5" width="8" height="6.6" fill="none" stroke="#e0e0e0" stroke-width="0.9"/><path d="M1.6 5.8 L3.4 3.4 L4.6 4.8 L5.6 4 L7.2 5.8 Z" fill="#e0e0e0"/></svg><svg style="left:852.5px;top:198.4px" width="8" height="8"><circle cx="4" cy="4" r="3.4" fill="none" stroke="#e0e0e0" stroke-width="0.9"/><path d="M1.6 6.4 A3.4 3.4 0 0 1 6.4 1.6 Z" fill="#e0e0e0"/></svg><div class="t" style="left:867.4px;top:197.2px;font-size:10.4px;font-family:'Liberation Serif',serif;color:#e0e0e0">T</div><svg style="left:882.4px;top:198.2px" width="9" height="9"><rect x="1.6" y="1.6" width="5.8" height="5.8" fill="none" stroke="#e0e0e0" stroke-width="0.9"/><rect x="0" y="0" width="2.6" height="2.6" fill="#e0e0e0"/><rect x="6.4" y="0" width="2.6" height="2.6" fill="#e0e0e0"/><rect x="0" y="6.4" width="2.6" height="2.6" fill="#e0e0e0"/><rect x="6.4" y="6.4" width="2.6" height="2.6" fill="#e0e0e0"/></svg><svg style="left:898px;top:198px" width="9" height="9"><path d="M1 1 H5.4 L7.6 3.2 V8.4 H1 Z" fill="none" stroke="#e0e0e0" stroke-width="0.9"/><rect x="2.6" y="4.6" width="3.6" height="3" fill="#e0e0e0"/><path d="M3.3 4.6 V3.8 C3.3 2.8 5.5 2.8 5.5 3.8 V4.6" fill="none" stroke="#e0e0e0" stroke-width="0.7"/></svg><div class="a" style="left:921.2px;top:197.4px;width:5.6px;height:10.8px;background:#3c3c3c;border-radius:2.8px;border:0.6px solid #6a6a6a"></div><div class="a" style="left:921.8px;top:196.8px;width:4.6px;height:4.6px;background:#e8e8e8;border-radius:50%"></div><div class="a" style="left:749px;top:211.6px;width:202.5px;height:0.7px;background:#464646;"></div><div class="a" style="left:752px;top:215px;width:107.2px;height:10.6px;background:#434343;border-radius:2px;border:0.6px solid #3a3a3a"></div><div class="t" style="left:756.6px;top:216.8px;font-size:7.3px;color:#e2e2e2;">Normal</div><svg style="left:851.5px;top:218.8px" width="5" height="4" viewBox="0 0 5 4"><path d="M0.4 0.6 L2.5 2.8 L4.6 0.6" stroke="#ccc" stroke-width="0.9" fill="none"/></svg><div class="t" style="left:862px;top:216.8px;font-size:7.3px;color:#d8d8d8;letter-spacing:-0.12px">Opacidad:</div><div class="a" style="left:894.5px;top:215px;width:22.2px;height:10.6px;background:#434343;border-radius:1.5px;border:0.6px solid #3a3a3a"></div><div class="t" style="left:896.8px;top:216.8px;font-size:7.3px;color:#f0f0f0;">100%</div><div class="a" style="left:917.6px;top:215px;width:9px;height:10.6px;background:#434343;border-radius:1.5px;border:0.6px solid #3a3a3a"></div><svg style="left:919.6px;top:218.8px" width="5" height="4" viewBox="0 0 5 4"><path d="M0.4 0.6 L2.5 2.8 L4.6 0.6" stroke="#ccc" stroke-width="0.9" fill="none"/></svg><div class="a" style="left:749px;top:229.4px;width:202.5px;height:0.7px;background:#464646;"></div><div class="t" style="left:752.6px;top:234.2px;font-size:7.3px;color:#d8d8d8;letter-spacing:-0.1px">Bloq.:</div><svg style="left:774px;top:234px" width="8" height="8"><rect x="0.4" y="0.4" width="7.2" height="7.2" fill="none" stroke="#aaa" stroke-width="0.7"/><rect x="1" y="1" width="2" height="2" fill="#aaa"/><rect x="5" y="1" width="2" height="2" fill="#aaa"/><rect x="3" y="3" width="2" height="2" fill="#aaa"/><rect x="1" y="5" width="2" height="2" fill="#aaa"/><rect x="5" y="5" width="2" height="2" fill="#aaa"/></svg><svg style="left:787.6px;top:233.4px" width="9" height="9"><path d="M8 0.4 L8.7 1.1 L4.6 5.8 L3.5 4.8 Z" fill="#e0e0e0"/><path d="M3 5.2 L4.2 6.4 C3.8 8 2.2 8.8 0.4 8.6 C1.4 7.8 1.6 5.8 3 5.2 Z" fill="#e0e0e0"/></svg><svg style="left:800.8px;top:233.6px" width="9" height="9" viewBox="0 0 11 11"><path d="M5.5 0 L7.3 2.2 H6.1 V4.9 H8.8 V3.7 L11 5.5 L8.8 7.3 V6.1 H6.1 V8.8 H7.3 L5.5 11 L3.7 8.8 H4.9 V6.1 H2.2 V7.3 L0 5.5 L2.2 3.7 V4.9 H4.9 V2.2 H3.7 Z" fill="#e0e0e0"/></svg><svg style="left:814.6px;top:233.4px" width="10" height="9"><path d="M2.4 0 V7 H10 M0 2 H7.6 V9" fill="none" stroke="#e0e0e0" stroke-width="0.9"/><path d="M6 0.6 L9.4 2.4" stroke="#e0e0e0" stroke-width="0.7" stroke-dasharray="1 0.8"/></svg><svg style="left:830.4px;top:233.2px" width="7" height="9"><rect x="0" y="3.8" width="7" height="5.2" rx="0.8" fill="#e0e0e0"/><path d="M1.6 3.8 V2.6 C1.6 0.4 5.4 0.4 5.4 2.6 V3.8" fill="none" stroke="#e0e0e0" stroke-width="1"/><circle cx="3.5" cy="6.2" r="0.8" fill="#535353"/></svg><div class="t" style="left:868.4px;top:234.2px;font-size:7.3px;color:#d8d8d8;letter-spacing:-0.12px">Relleno:</div><div class="a" style="left:894.5px;top:232.6px;width:22.2px;height:10.4px;background:#434343;border-radius:1.5px;border:0.6px solid #3a3a3a"></div><div class="t" style="left:896.8px;top:234.2px;font-size:7.3px;color:#f0f0f0;">100%</div><div class="a" style="left:917.6px;top:232.6px;width:9px;height:10.4px;background:#434343;border-radius:1.5px;border:0.6px solid #3a3a3a"></div><svg style="left:919.6px;top:236.4px" width="5" height="4" viewBox="0 0 5 4"><path d="M0.4 0.6 L2.5 2.8 L4.6 0.6" stroke="#ccc" stroke-width="0.9" fill="none"/></svg><div class="a" style="left:749px;top:248.2px;width:202.5px;height:161.40000000000003px;overflow:hidden;background:#535353"><div class="a" style="left:0;top:0.0px;width:192.6px;height:20.3px;background:#6b6b6b"></div><div class="a" style="left:0;top:19.7px;width:192.6px;height:0.7px;background:#474747"></div><svg style="left:5.1px;top:7.15px" width="9" height="6" viewBox="0 0 9 6"><path d="M0.3 3 C1.6 0.9 3 0.3 4.5 0.3 C6 0.3 7.4 0.9 8.7 3 C7.4 5.1 6 5.7 4.5 5.7 C3 5.7 1.6 5.1 0.3 3 Z" fill="#ededed"/><circle cx="4.5" cy="3" r="1.7" fill="#535353"/><circle cx="4.5" cy="3" r="0.8" fill="#ededed"/></svg><div class="a" style="left:21.8px;top:3.2px;width:20.4px;height:13.8px;background:repeating-conic-gradient(#c6c6c6 0% 25%,#f6f6f6 0% 50%) 0 0/2.6px 2.6px;outline:1px solid #f0f0f0;"></div><svg style="left:34.2px;top:9.0px" width="8" height="8"><rect width="8" height="8" fill="#555"/><rect x="1.8" y="1.8" width="4.4" height="4.4" fill="none" stroke="#eee" stroke-width="0.7"/><rect x="0.8" y="0.8" width="2" height="2" fill="#eee"/><rect x="5.2" y="0.8" width="2" height="2" fill="#eee"/><rect x="0.8" y="5.2" width="2" height="2" fill="#eee"/><rect x="5.2" y="5.2" width="2" height="2" fill="#eee"/></svg><div class="t" style="left:47.4px;top:6.6px;font-size:6.9px;color:#ececec;letter-spacing:-0.1px">FORM</div><div class="a" style="left:0;top:40.0px;width:192.6px;height:0.7px;background:#474747"></div><svg style="left:5.1px;top:27.450000000000003px" width="9" height="6" viewBox="0 0 9 6"><path d="M0.3 3 C1.6 0.9 3 0.3 4.5 0.3 C6 0.3 7.4 0.9 8.7 3 C7.4 5.1 6 5.7 4.5 5.7 C3 5.7 1.6 5.1 0.3 3 Z" fill="#ededed"/><circle cx="4.5" cy="3" r="1.7" fill="#535353"/><circle cx="4.5" cy="3" r="0.8" fill="#ededed"/></svg><div class="a" style="left:21.8px;top:23.5px;width:20.4px;height:13.8px;background:repeating-conic-gradient(#c6c6c6 0% 25%,#f6f6f6 0% 50%) 0 0/2.6px 2.6px;"></div><div class="a" style="left:34.8px;top:32.5px;width:3px;height:1.4px;background:#f2e23a"></div><div class="t" style="left:47.4px;top:26.9px;font-size:6.9px;color:#ececec;letter-spacing:-0.1px">LAYER 1</div><div class="a" style="left:0;top:60.300000000000004px;width:192.6px;height:0.7px;background:#474747"></div><svg style="left:5.1px;top:47.75px" width="9" height="6" viewBox="0 0 9 6"><path d="M0.3 3 C1.6 0.9 3 0.3 4.5 0.3 C6 0.3 7.4 0.9 8.7 3 C7.4 5.1 6 5.7 4.5 5.7 C3 5.7 1.6 5.1 0.3 3 Z" fill="#ededed"/><circle cx="4.5" cy="3" r="1.7" fill="#535353"/><circle cx="4.5" cy="3" r="0.8" fill="#ededed"/></svg><div class="a" style="left:21.8px;top:43.800000000000004px;width:20.4px;height:13.8px;background:repeating-conic-gradient(#c6c6c6 0% 25%,#f6f6f6 0% 50%) 0 0/2.6px 2.6px;"></div><div class="a" style="left:27.8px;top:52.2px;width:3px;height:2.4px;background:#333"></div><div class="t" style="left:47.4px;top:47.2px;font-size:6.9px;color:#ececec;letter-spacing:-0.1px">IMAGE</div><div class="a" style="left:0;top:80.60000000000001px;width:192.6px;height:0.7px;background:#474747"></div><svg style="left:5.1px;top:68.05000000000001px" width="9" height="6" viewBox="0 0 9 6"><path d="M0.3 3 C1.6 0.9 3 0.3 4.5 0.3 C6 0.3 7.4 0.9 8.7 3 C7.4 5.1 6 5.7 4.5 5.7 C3 5.7 1.6 5.1 0.3 3 Z" fill="#ededed"/><circle cx="4.5" cy="3" r="1.7" fill="#535353"/><circle cx="4.5" cy="3" r="0.8" fill="#ededed"/></svg><div class="t" style="left:27.6px;top:65.30000000000001px;font-size:11px;font-family:'Liberation Serif',serif;color:#e6e6e6">T</div><div class="t" style="left:47.4px;top:67.5px;font-size:6.9px;color:#ececec;letter-spacing:-0.1px">E-LEARNING</div><div class="a" style="left:0;top:100.9px;width:192.6px;height:0.7px;background:#474747"></div><svg style="left:5.1px;top:88.35000000000001px" width="9" height="6" viewBox="0 0 9 6"><path d="M0.3 3 C1.6 0.9 3 0.3 4.5 0.3 C6 0.3 7.4 0.9 8.7 3 C7.4 5.1 6 5.7 4.5 5.7 C3 5.7 1.6 5.1 0.3 3 Z" fill="#ededed"/><circle cx="4.5" cy="3" r="1.7" fill="#535353"/><circle cx="4.5" cy="3" r="0.8" fill="#ededed"/></svg><div class="t" style="left:27.6px;top:85.60000000000001px;font-size:11px;font-family:'Liberation Serif',serif;color:#e6e6e6">T</div><div class="t" style="left:47.4px;top:87.8px;font-size:6.9px;color:#ececec;letter-spacing:-0.1px">A lo largo de este cur.... en las posibilidades</div><div class="a" style="left:0;top:121.2px;width:192.6px;height:0.7px;background:#474747"></div><svg style="left:5.1px;top:108.65px" width="9" height="6" viewBox="0 0 9 6"><path d="M0.3 3 C1.6 0.9 3 0.3 4.5 0.3 C6 0.3 7.4 0.9 8.7 3 C7.4 5.1 6 5.7 4.5 5.7 C3 5.7 1.6 5.1 0.3 3 Z" fill="#ededed"/><circle cx="4.5" cy="3" r="1.7" fill="#535353"/><circle cx="4.5" cy="3" r="0.8" fill="#ededed"/></svg><div class="a" style="left:21.8px;top:104.7px;width:20.4px;height:13.8px;background:repeating-conic-gradient(#c6c6c6 0% 25%,#f6f6f6 0% 50%) 0 0/2.6px 2.6px;"></div><div class="a" style="left:24.8px;top:113.3px;width:5px;height:2.4px;background:#333"></div><svg style="left:34.2px;top:110.5px" width="8" height="8"><rect width="8" height="8" fill="#4c4c4c"/><rect x="1.2" y="2.8" width="3.6" height="4" fill="#eee"/><path d="M3 1 H6.8 V5.2 H5.6 V2.2 H3 Z" fill="#eee"/></svg><div class="t" style="left:47.4px;top:108.1px;font-size:6.9px;color:#ececec;letter-spacing:-0.1px">IMAGEN</div><div class="a" style="left:0;top:141.50000000000003px;width:192.6px;height:0.7px;background:#474747"></div><svg style="left:5.1px;top:128.95000000000002px" width="9" height="6" viewBox="0 0 9 6"><path d="M0.3 3 C1.6 0.9 3 0.3 4.5 0.3 C6 0.3 7.4 0.9 8.7 3 C7.4 5.1 6 5.7 4.5 5.7 C3 5.7 1.6 5.1 0.3 3 Z" fill="#ededed"/><circle cx="4.5" cy="3" r="1.7" fill="#535353"/><circle cx="4.5" cy="3" r="0.8" fill="#ededed"/></svg><div class="a" style="left:21.8px;top:125.00000000000001px;width:20.4px;height:13.8px;background:repeating-conic-gradient(#c6c6c6 0% 25%,#f6f6f6 0% 50%) 0 0/2.6px 2.6px;"></div><div class="a" style="left:26.8px;top:133.60000000000002px;width:5px;height:2.4px;background:#333"></div><svg style="left:34.2px;top:130.8px" width="8" height="8"><rect width="8" height="8" fill="#4c4c4c"/><rect x="1.2" y="2.8" width="3.6" height="4" fill="#eee"/><path d="M3 1 H6.8 V5.2 H5.6 V2.2 H3 Z" fill="#eee"/></svg><div class="t" style="left:47.4px;top:128.4px;font-size:6.9px;color:#ececec;letter-spacing:-0.1px">LAYER 10</div><div class="a" style="left:0;top:161.8px;width:192.6px;height:0.7px;background:#474747"></div><svg style="left:5.1px;top:149.25px" width="9" height="6" viewBox="0 0 9 6"><path d="M0.3 3 C1.6 0.9 3 0.3 4.5 0.3 C6 0.3 7.4 0.9 8.7 3 C7.4 5.1 6 5.7 4.5 5.7 C3 5.7 1.6 5.1 0.3 3 Z" fill="#ededed"/><circle cx="4.5" cy="3" r="1.7" fill="#535353"/><circle cx="4.5" cy="3" r="0.8" fill="#ededed"/></svg><div class="a" style="left:21.8px;top:145.29999999999998px;width:20.4px;height:13.8px;background:repeating-conic-gradient(#c6c6c6 0% 25%,#f6f6f6 0% 50%) 0 0/2.6px 2.6px;"></div><div class="a" style="left:26.3px;top:148.29999999999998px;width:5.5px;height:10.8px;background:#c9cdea"></div><svg style="left:34.2px;top:151.1px" width="8" height="8"><rect width="8" height="8" fill="#555"/><rect x="1.8" y="1.8" width="4.4" height="4.4" fill="none" stroke="#eee" stroke-width="0.7"/><rect x="0.8" y="0.8" width="2" height="2" fill="#eee"/><rect x="5.2" y="0.8" width="2" height="2" fill="#eee"/><rect x="0.8" y="5.2" width="2" height="2" fill="#eee"/><rect x="5.2" y="5.2" width="2" height="2" fill="#eee"/></svg><div class="t" style="left:47.4px;top:148.7px;font-size:6.9px;color:#ececec;letter-spacing:-0.1px">FORM 2</div><div class="a" style="left:19.2px;top:0;width:0.7px;height:170px;background:#474747"></div><div class="a" style="left:192.6px;top:0;width:10px;height:170px;background:#4a4a4a"></div><div class="a" style="left:195px;top:30.80000000000001px;width:5px;height:47.5px;background:#6a6a6a;border-radius:2.5px"></div></div><div class="a" style="left:749px;top:409.6px;width:202.5px;height:0.7px;background:#3f3f3f;"></div><svg style="left:822.6px;top:414.5px" width="9" height="5"><rect x="0.4" y="0.6" width="4.6" height="3.6" rx="1.8" fill="none" stroke="#8a8a8a" stroke-width="0.8"/><rect x="4" y="0.6" width="4.6" height="3.6" rx="1.8" fill="none" stroke="#8a8a8a" stroke-width="0.8"/></svg><div class="t" style="left:841px;top:412px;font-size:9px;font-style:italic;font-family:'Liberation Serif',serif;color:#e0e0e0">fx</div><div class="a" style="left:849.6px;top:420.2px;width:1.2px;height:1.2px;background:#ccc;"></div><svg style="left:857px;top:413.5px" width="9" height="7"><rect width="9" height="7" rx="0.8" fill="#e0e0e0"/><circle cx="4.5" cy="3.5" r="2.1" fill="#535353"/></svg><svg style="left:874px;top:413px" width="8" height="8"><circle cx="4" cy="4" r="3.4" fill="none" stroke="#e0e0e0" stroke-width="0.9"/><path d="M1.6 6.4 A3.4 3.4 0 0 1 6.4 1.6 Z" fill="#e0e0e0"/></svg><div class="a" style="left:883px;top:420.2px;width:1.2px;height:1.2px;background:#ccc;"></div><svg style="left:890.6px;top:413.2px" width="9" height="8"><path d="M0 0.6 H3.4 L4.4 1.8 H9 V7.6 H0 Z" fill="#e0e0e0"/></svg><svg style="left:908.6px;top:413px" width="8" height="8"><rect x="0.5" y="0.5" width="7" height="7" fill="none" stroke="#e0e0e0" stroke-width="0.9"/><path d="M4 2.2 V5.8 M2.2 4 H5.8" stroke="#e0e0e0" stroke-width="0.9"/></svg><svg style="left:926.4px;top:412.6px" width="7" height="9"><path d="M0 1.6 H7 M2.4 1.6 V0.5 H4.6 V1.6" stroke="#e0e0e0" stroke-width="0.8" fill="none"/><path d="M0.9 2.6 H6.1 L5.6 8.6 H1.4 Z" fill="none" stroke="#e0e0e0" stroke-width="0.8"/><path d="M2.6 3.6 V7.6 M4.4 3.6 V7.6" stroke="#e0e0e0" stroke-width="0.6"/></svg><div class="a" style="left:749px;top:427.6px;width:202.5px;height:0.7px;background:#444;"></div><div class="a" style="left:843px;top:429.6px;width:12px;height:1.2px;background:#4a4a4a;"></div>
<div class="a" style="left:163px;top:504px;width:270px;height:22px;background:#4b4b4b;border-radius:3px;box-shadow:0 1px 3px rgba(0,0,0,0.5)"></div><div class="a" style="left:165.6px;top:507.6px;width:2px;height:1.2px;background:#999;"></div><div class="a" style="left:165.6px;top:510.20000000000005px;width:2px;height:1.2px;background:#999;"></div><div class="a" style="left:165.6px;top:512.8000000000001px;width:2px;height:1.2px;background:#999;"></div><div class="a" style="left:165.6px;top:515.4px;width:2px;height:1.2px;background:#999;"></div><div class="a" style="left:165.6px;top:518.0px;width:2px;height:1.2px;background:#999;"></div><div class="a" style="left:165.6px;top:520.6px;width:2px;height:1.2px;background:#999;"></div><div class="t" style="left:172px;top:511.4px;font-size:8.2px;color:#d6d6d6;letter-spacing:-0.294px;">Relleno</div><svg style="left:201.5px;top:509.5px" width="18" height="11"><rect x="0.5" y="0.5" width="17" height="10" fill="#fff" stroke="#666" stroke-width="1"/><path d="M2.5 9.5 L15.5 1.5" stroke="#e03030" stroke-width="1"/></svg><div class="t" style="left:222.7px;top:511.4px;font-size:8.2px;color:#d6d6d6;letter-spacing:-0.356px;">Trazo</div><svg style="left:246.5px;top:509.5px" width="18" height="11"><rect x="0.5" y="0.5" width="17" height="10" fill="#ff0a8c" stroke="#666" stroke-width="1"/><rect x="4.5" y="3.6" width="9" height="3.8" fill="none" stroke="#fff" stroke-width="1"/></svg><div class="a" style="left:267.8px;top:509px;width:46.5px;height:12.2px;background:#393939;border-radius:1.5px"></div><div class="a" style="left:304.7px;top:509px;width:0.7px;height:12.2px;background:#505050;"></div><div class="t" style="left:270px;top:511.5px;font-size:8.2px;color:#f0f0f0;">10 px</div><svg style="left:307px;top:513.5px" width="5" height="4" viewBox="0 0 5 4"><path d="M0.4 0.6 L2.5 2.8 L4.6 0.6" stroke="#ccc" stroke-width="0.9" fill="none"/></svg><div class="a" style="left:318.5px;top:509px;width:30.5px;height:12.2px;background:#3f3f3f;border-radius:1.5px"></div><div class="a" style="left:321.5px;top:514.4px;width:18.5px;height:1.6px;background:#ddd;"></div><svg style="left:342px;top:513.5px" width="5" height="4" viewBox="0 0 5 4"><path d="M0.4 0.6 L2.5 2.8 L4.6 0.6" stroke="#ccc" stroke-width="0.9" fill="none"/></svg><svg style="left:361px;top:509.5px" width="12" height="12"><rect x="0.6" y="0.6" width="7.5" height="7.5" fill="#4b4b4b" stroke="#ddd" stroke-width="1.1"/><rect x="3.2" y="3.2" width="8" height="8" fill="#ddd"/><path d="M7.2 5 V9.4 M5 7.2 H9.4" stroke="#4b4b4b" stroke-width="1.1"/></svg><svg style="left:388px;top:510px" width="11" height="10"><path d="M0 1.8 H11 M0 5 H11 M0 8.2 H11" stroke="#ccc" stroke-width="0.8"/><circle cx="3.5" cy="1.8" r="1.3" fill="#4b4b4b" stroke="#ccc" stroke-width="0.8"/><circle cx="7.5" cy="5" r="1.3" fill="#4b4b4b" stroke="#ccc" stroke-width="0.8"/><circle cx="4.5" cy="8.2" r="1.3" fill="#4b4b4b" stroke="#ccc" stroke-width="0.8"/></svg><svg style="left:415px;top:514px" width="10" height="3"><circle cx="1.2" cy="1.5" r="1" fill="#ddd"/><circle cx="4.8" cy="1.5" r="1" fill="#ddd"/><circle cx="8.4" cy="1.5" r="1" fill="#ddd"/></svg>
<div class="a" style="left:27px;top:590px;width:887px;height:10px;background:#424242;"></div><div class="a" style="left:27px;top:590px;width:38px;height:10px;background:#535353;"></div><div class="a" style="left:65px;top:590px;width:148px;height:10px;background:#4b4b4b;"></div><div class="t" style="left:32px;top:592.2px;font-size:8.2px;color:#f0f0f0;letter-spacing:0.164px;">34,37%</div><div class="t" style="left:93px;top:592.5px;font-size:6.6px;color:#d0d0d0;letter-spacing:0.125px;">4566 px x 3161 px (72 ppp)</div><svg style="left:206.5px;top:592.3px" width="4" height="6"><path d="M0.5 0.5 L3 3 L0.5 5.5" stroke="#ccc" stroke-width="0.8" fill="none"/></svg><div class="a" style="left:419px;top:592px;width:288px;height:6px;background:#555;border-radius:3px"></div><div class="a" style="left:904px;top:590px;width:10px;height:10px;background:#4a4a4a;"></div>
</div></body></html>
